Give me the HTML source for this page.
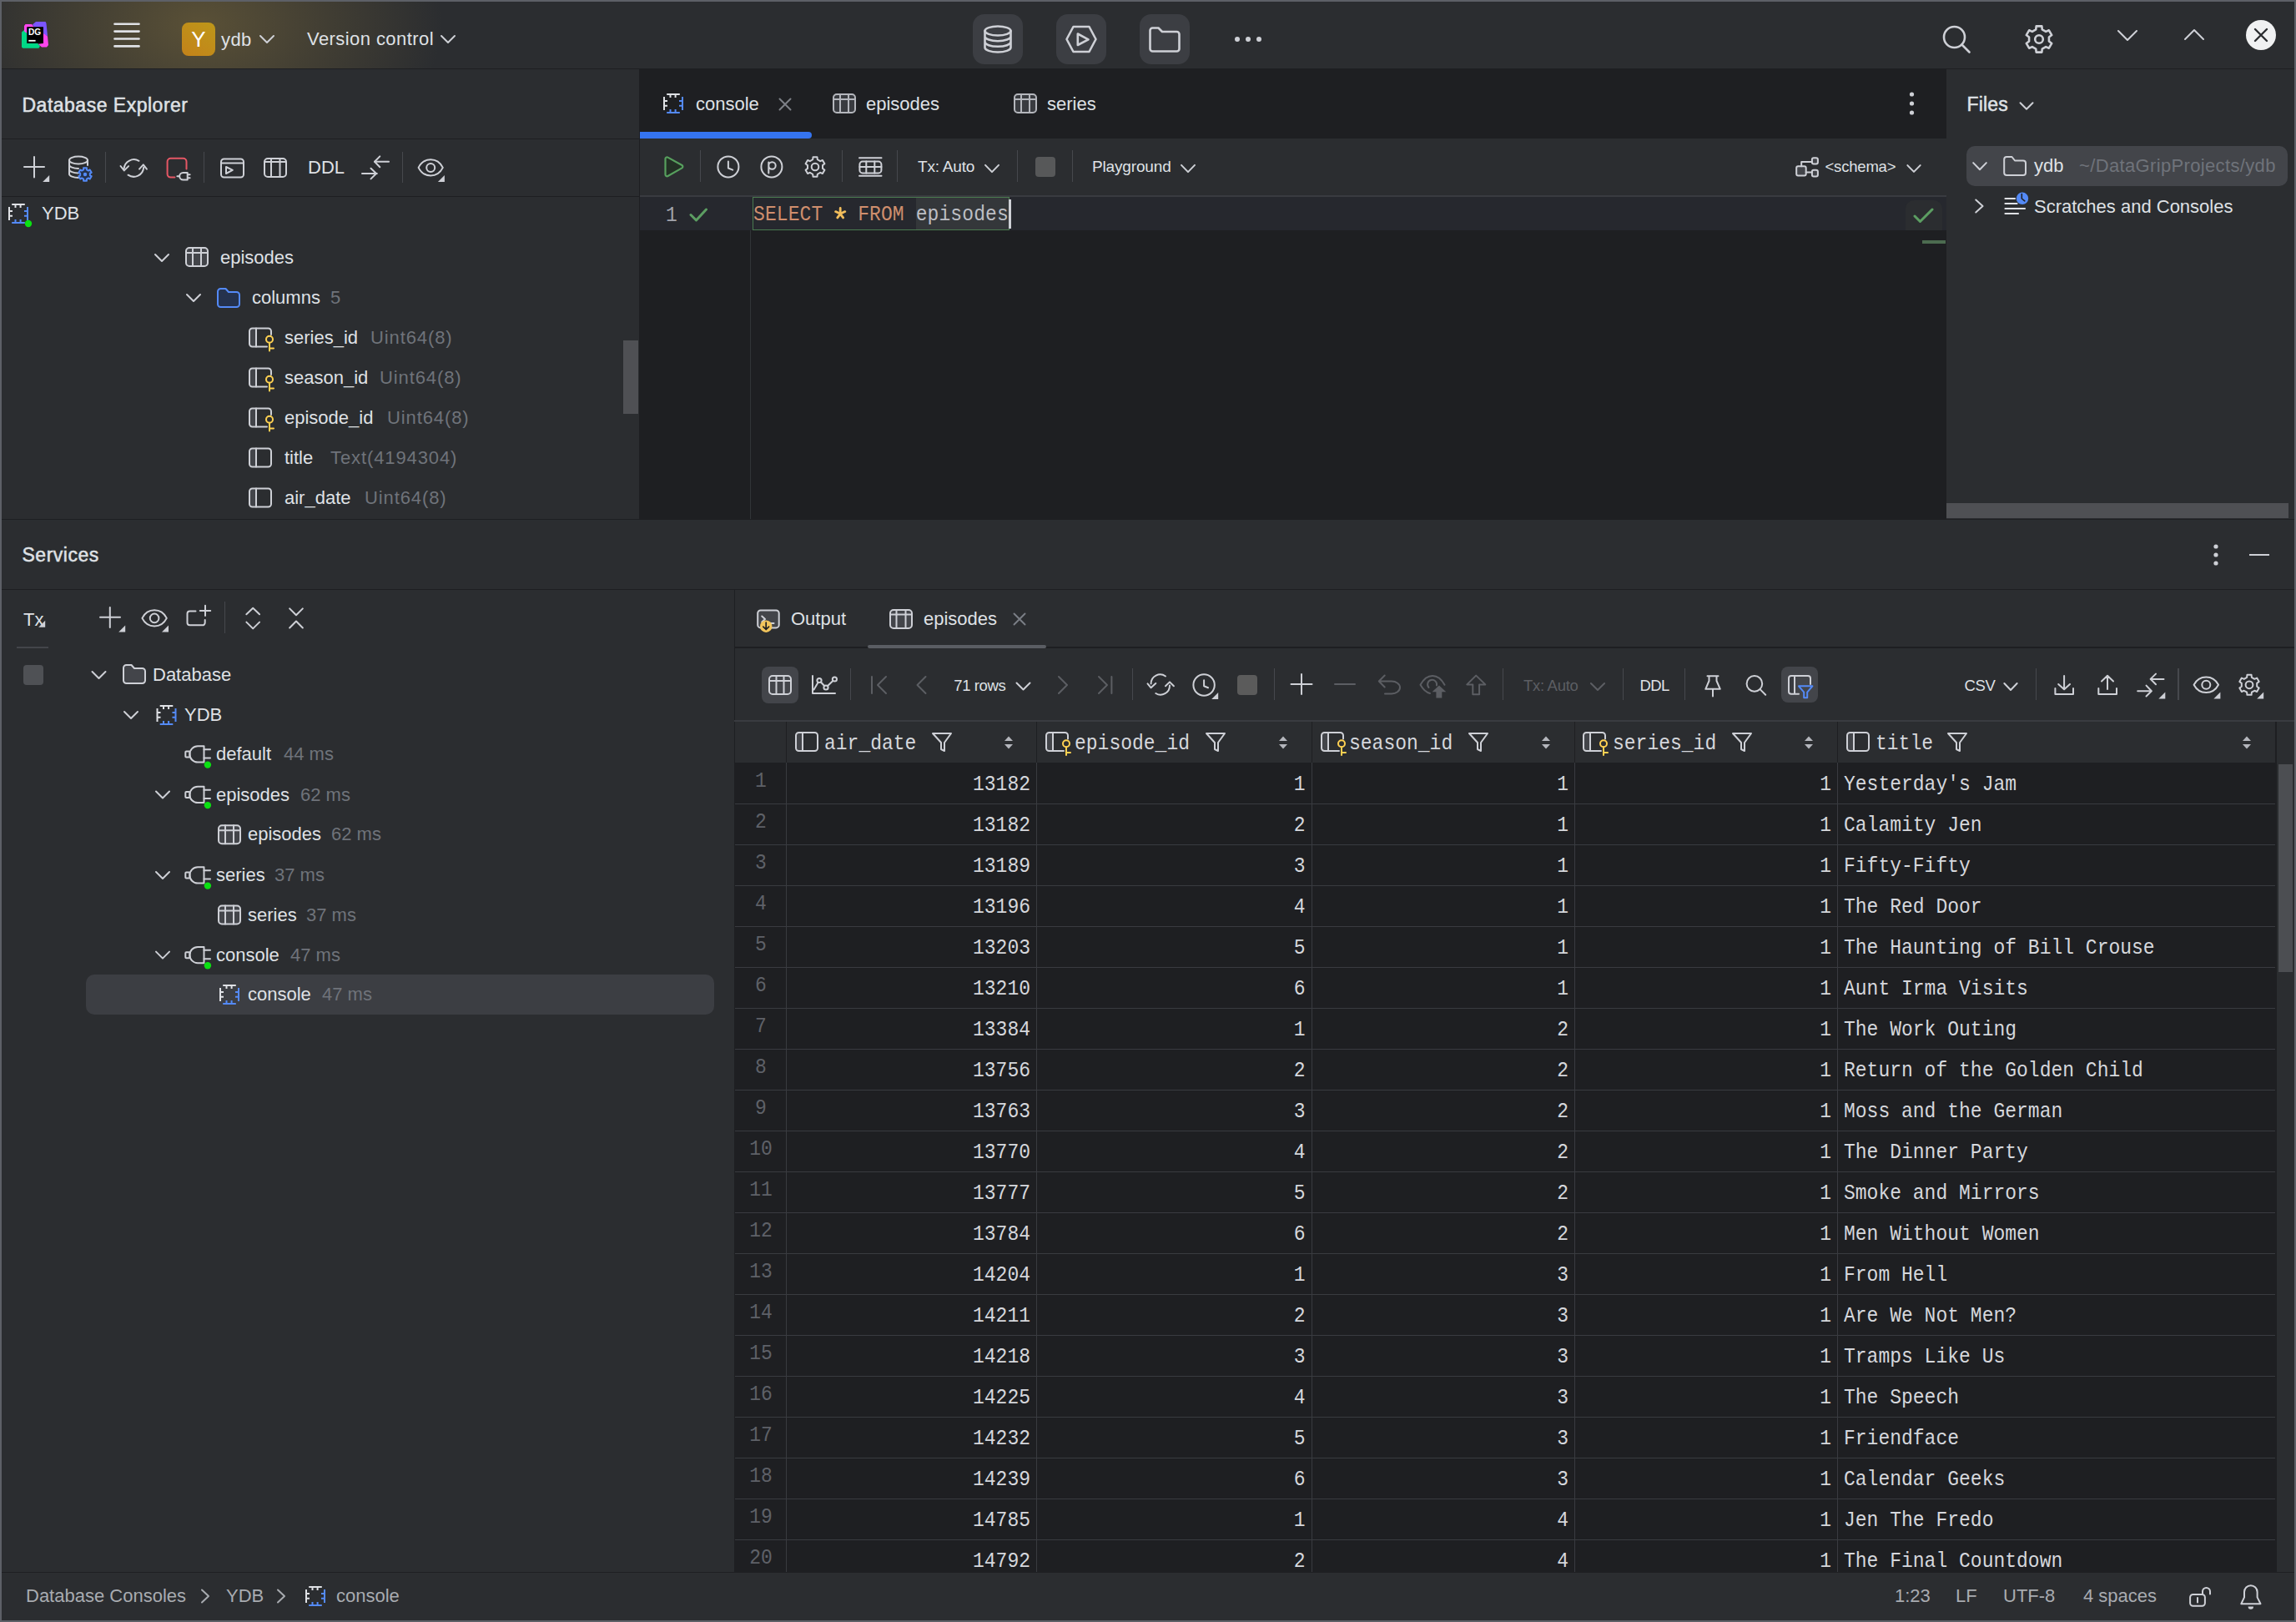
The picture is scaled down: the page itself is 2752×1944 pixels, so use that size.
<!DOCTYPE html><html><head><meta charset="utf-8"><style>
html,body{margin:0;padding:0;width:2752px;height:1944px;overflow:hidden;background:#2b2d30;}
body{position:relative;font-family:'Liberation Sans',sans-serif;}
div{box-sizing:border-box}
</style></head><body>
<div style="position:absolute;left:0px;top:0px;width:2752px;height:82px;background:#2b2d30;border-radius:0px;"></div>
<div style="position:absolute;left:0px;top:0px;width:900px;height:82px;background:radial-gradient(ellipse 290px 190px at 240px 30px, rgba(145,122,62,0.46), rgba(145,122,62,0) 100%);border-radius:0px;"></div>
<div style="position:absolute;left:0px;top:82px;width:2752px;height:1px;background:#1e1f22;border-radius:0px;"></div>
<div style="position:absolute;left:218px;top:27px;width:40px;height:40px;border-radius:8px;background:linear-gradient(35deg,#c4821a,#bd9719);color:#fff;font-family:'Liberation Sans';font-size:26px;line-height:40px;text-align:center">Y</div>
<div style="position:absolute;left:265px;top:27.6px;height:40px;line-height:40px;font-family:'Liberation Sans', sans-serif;font-size:22px;font-weight:400;color:#dfe1e5;white-space:pre;letter-spacing:0.4px">ydb</div>
<div style="position:absolute;left:368px;top:27.4px;height:40px;line-height:40px;font-family:'Liberation Sans', sans-serif;font-size:22px;font-weight:400;color:#dfe1e5;white-space:pre;letter-spacing:0.43px">Version control</div>
<div style="position:absolute;left:1166px;top:17px;width:60px;height:60px;background:#3c3e43;border-radius:14px;"></div>
<div style="position:absolute;left:1266px;top:17px;width:60px;height:60px;background:#3c3e43;border-radius:14px;"></div>
<div style="position:absolute;left:1366px;top:17px;width:60px;height:60px;background:#3c3e43;border-radius:14px;"></div>
<div style="position:absolute;left:26.5px;top:105.5px;height:40px;line-height:40px;font-family:'Liberation Sans', sans-serif;font-size:23px;font-weight:400;color:#dfe1e5;white-space:pre;letter-spacing:0.5px;-webkit-text-stroke:0.5px #dfe1e5">Database Explorer</div>
<div style="position:absolute;left:0px;top:166px;width:766px;height:1px;background:#1e1f22;border-radius:0px;"></div>
<div style="position:absolute;left:125.75px;top:181.5px;width:1.5px;height:37.0px;background:#46484d;border-radius:0px;"></div>
<div style="position:absolute;left:243.95px;top:181.5px;width:1.5px;height:37.0px;background:#46484d;border-radius:0px;"></div>
<div style="position:absolute;left:369px;top:181.0px;height:40px;line-height:40px;font-family:'Liberation Sans', sans-serif;font-size:22px;font-weight:400;color:#dfe1e5;white-space:pre;">DDL</div>
<div style="position:absolute;left:481.75px;top:181.5px;width:1.5px;height:37.0px;background:#46484d;border-radius:0px;"></div>
<div style="position:absolute;left:0px;top:235px;width:766px;height:1px;background:#1e1f22;border-radius:0px;"></div>
<div style="position:absolute;left:50px;top:236.0px;height:40px;line-height:40px;font-family:'Liberation Sans', sans-serif;font-size:22px;font-weight:400;color:#dfe1e5;white-space:pre;">YDB</div>
<div style="position:absolute;left:264px;top:289.0px;height:40px;line-height:40px;font-family:'Liberation Sans', sans-serif;font-size:22px;font-weight:400;color:#dfe1e5;white-space:pre;">episodes</div>
<div style="position:absolute;left:302px;top:337.0px;height:40px;line-height:40px;font-family:'Liberation Sans', sans-serif;font-size:22px;font-weight:400;color:#dfe1e5;white-space:pre;">columns</div>
<div style="position:absolute;left:396px;top:337.0px;height:40px;line-height:40px;font-family:'Liberation Sans', sans-serif;font-size:22px;font-weight:400;color:#6f737a;white-space:pre;">5</div>
<div style="position:absolute;left:341px;top:385.0px;height:40px;line-height:40px;font-family:'Liberation Sans', sans-serif;font-size:22px;font-weight:400;color:#dfe1e5;white-space:pre;">series_id</div>
<div style="position:absolute;left:444px;top:385.0px;height:40px;line-height:40px;font-family:'Liberation Sans', sans-serif;font-size:22px;font-weight:400;color:#6f737a;white-space:pre;letter-spacing:0.9px">Uint64(8)</div>
<div style="position:absolute;left:341px;top:433.0px;height:40px;line-height:40px;font-family:'Liberation Sans', sans-serif;font-size:22px;font-weight:400;color:#dfe1e5;white-space:pre;">season_id</div>
<div style="position:absolute;left:455px;top:433.0px;height:40px;line-height:40px;font-family:'Liberation Sans', sans-serif;font-size:22px;font-weight:400;color:#6f737a;white-space:pre;letter-spacing:0.9px">Uint64(8)</div>
<div style="position:absolute;left:341px;top:481.0px;height:40px;line-height:40px;font-family:'Liberation Sans', sans-serif;font-size:22px;font-weight:400;color:#dfe1e5;white-space:pre;">episode_id</div>
<div style="position:absolute;left:464px;top:481.0px;height:40px;line-height:40px;font-family:'Liberation Sans', sans-serif;font-size:22px;font-weight:400;color:#6f737a;white-space:pre;letter-spacing:0.9px">Uint64(8)</div>
<div style="position:absolute;left:341px;top:529.0px;height:40px;line-height:40px;font-family:'Liberation Sans', sans-serif;font-size:22px;font-weight:400;color:#dfe1e5;white-space:pre;">title</div>
<div style="position:absolute;left:396px;top:529.0px;height:40px;line-height:40px;font-family:'Liberation Sans', sans-serif;font-size:22px;font-weight:400;color:#6f737a;white-space:pre;letter-spacing:0.9px">Text(4194304)</div>
<div style="position:absolute;left:341px;top:577.0px;height:40px;line-height:40px;font-family:'Liberation Sans', sans-serif;font-size:22px;font-weight:400;color:#dfe1e5;white-space:pre;">air_date</div>
<div style="position:absolute;left:437px;top:577.0px;height:40px;line-height:40px;font-family:'Liberation Sans', sans-serif;font-size:22px;font-weight:400;color:#6f737a;white-space:pre;letter-spacing:0.9px">Uint64(8)</div>
<div style="position:absolute;left:747px;top:408px;width:18px;height:88px;background:#4f5054;border-radius:0px;"></div>
<div style="position:absolute;left:766px;top:83px;width:1px;height:540px;background:#1e1f22;border-radius:0px;"></div>
<div style="position:absolute;left:767px;top:83px;width:1566px;height:83px;background:#1e1f22;border-radius:0px;"></div>
<div style="position:absolute;left:834px;top:105.0px;height:40px;line-height:40px;font-family:'Liberation Sans', sans-serif;font-size:22px;font-weight:400;color:#dfe1e5;white-space:pre;">console</div>
<div style="position:absolute;left:767px;top:158px;width:206px;height:8px;background:#3574f0;border-radius:0px;border-radius:0 4px 4px 0"></div>
<div style="position:absolute;left:1038px;top:105.0px;height:40px;line-height:40px;font-family:'Liberation Sans', sans-serif;font-size:22px;font-weight:400;color:#dfe1e5;white-space:pre;">episodes</div>
<div style="position:absolute;left:1255px;top:105.0px;height:40px;line-height:40px;font-family:'Liberation Sans', sans-serif;font-size:22px;font-weight:400;color:#dfe1e5;white-space:pre;">series</div>
<div style="position:absolute;left:767px;top:166px;width:1566px;height:68px;background:#2b2d30;border-radius:0px;"></div>
<div style="position:absolute;left:767px;top:234px;width:1566px;height:2px;background:#393b40;border-radius:0px;"></div>
<div style="position:absolute;left:838.85px;top:180px;width:1.5px;height:38px;background:#46484d;border-radius:0px;"></div>
<div style="position:absolute;left:1008.75px;top:180px;width:1.5px;height:38px;background:#46484d;border-radius:0px;"></div>
<div style="position:absolute;left:1074.75px;top:180px;width:1.5px;height:38px;background:#46484d;border-radius:0px;"></div>
<div style="position:absolute;left:1100px;top:180.4px;height:40px;line-height:40px;font-family:'Liberation Sans', sans-serif;font-size:19px;font-weight:400;color:#dfe1e5;white-space:pre;letter-spacing:-0.2px">Tx: Auto</div>
<div style="position:absolute;left:1218.55px;top:180px;width:1.5px;height:38px;background:#46484d;border-radius:0px;"></div>
<div style="position:absolute;left:1241px;top:188px;width:24px;height:24px;background:#575859;border-radius:4px;"></div>
<div style="position:absolute;left:1284.75px;top:180px;width:1.5px;height:38px;background:#46484d;border-radius:0px;"></div>
<div style="position:absolute;left:1309px;top:180.4px;height:40px;line-height:40px;font-family:'Liberation Sans', sans-serif;font-size:19px;font-weight:400;color:#dfe1e5;white-space:pre;letter-spacing:-0.15px">Playground</div>
<div style="position:absolute;left:2187.5px;top:180.3px;height:40px;line-height:40px;font-family:'Liberation Sans', sans-serif;font-size:18.5px;font-weight:400;color:#dfe1e5;white-space:pre;letter-spacing:-0.2px">&lt;schema&gt;</div>
<div style="position:absolute;left:767px;top:236px;width:1566px;height:387px;background:#1e1f22;border-radius:0px;"></div>
<div style="position:absolute;left:767px;top:236px;width:1566px;height:40px;background:#26282e;border-radius:0px;"></div>
<div style="position:absolute;left:798px;top:238.0px;height:40px;line-height:40px;font-family:'Liberation Mono', monospace;font-size:23px;font-weight:400;color:#a1a3ab;white-space:pre;transform:scaleY(1.12);">1</div>
<div style="position:absolute;left:899px;top:276px;width:1px;height:347px;background:#313438;border-radius:0px;"></div>
<div style="position:absolute;left:902px;top:236px;width:308px;height:40px;background:transparent;border-radius:0px;border:1px solid #4a7a4f"></div>
<div style="position:absolute;left:1098px;top:237px;width:111px;height:38px;background:#34373a;border-radius:0px;"></div>
<div style="position:absolute;left:903px;top:237px;height:40px;line-height:40px;font-family:'Liberation Mono', monospace;font-size:23px;white-space:pre;color:#bcbec4;transform:scaleY(1.12);letter-spacing:0.1px"><span style="color:#cf8e6d">SELECT</span>   <span style="color:#cf8e6d">FROM</span> episodes</div>
<div style="position:absolute;left:1209px;top:239px;width:3px;height:35px;background:#ced0d6;border-radius:0px;"></div>
<div style="position:absolute;left:2284px;top:240px;width:44px;height:36px;background:#2b2d30;border-radius:0px;border-radius:10px 10px 0 0"></div>
<div style="position:absolute;left:2304px;top:288px;width:28px;height:4px;background:#4c6b50;border-radius:0px;"></div>
<div style="position:absolute;left:2333px;top:83px;width:417px;height:540px;background:#2b2d30;border-radius:0px;"></div>
<div style="position:absolute;left:2357.5px;top:105.0px;height:40px;line-height:40px;font-family:'Liberation Sans', sans-serif;font-size:23px;font-weight:400;color:#dfe1e5;white-space:pre;letter-spacing:0.2px;-webkit-text-stroke:0.5px #dfe1e5">Files</div>
<div style="position:absolute;left:2357px;top:175px;width:385px;height:48px;background:#43454a;border-radius:10px;"></div>
<div style="position:absolute;left:2438px;top:179.0px;height:40px;line-height:40px;font-family:'Liberation Sans', sans-serif;font-size:22px;font-weight:400;color:#dfe1e5;white-space:pre;">ydb</div>
<div style="position:absolute;left:2492px;top:179.0px;height:40px;line-height:40px;font-family:'Liberation Sans', sans-serif;font-size:22px;font-weight:400;color:#6f737a;white-space:pre;letter-spacing:0.35px">~/DataGripProjects/ydb</div>
<div style="position:absolute;left:2438px;top:228.0px;height:40px;line-height:40px;font-family:'Liberation Sans', sans-serif;font-size:22px;font-weight:400;color:#dfe1e5;white-space:pre;">Scratches and Consoles</div>
<div style="position:absolute;left:2333px;top:603px;width:410px;height:18px;background:#4f5054;border-radius:0px;"></div>
<div style="position:absolute;left:0px;top:622px;width:2752px;height:1px;background:#1e1f22;border-radius:0px;"></div>
<div style="position:absolute;left:26.5px;top:645.0px;height:40px;line-height:40px;font-family:'Liberation Sans', sans-serif;font-size:23px;font-weight:400;color:#dfe1e5;white-space:pre;letter-spacing:0.5px;-webkit-text-stroke:0.5px #dfe1e5">Services</div>
<div style="position:absolute;left:2696px;top:664px;width:24px;height:2px;background:#ced0d6;border-radius:0px;"></div>
<div style="position:absolute;left:0px;top:706px;width:2752px;height:1px;background:#1e1f22;border-radius:0px;"></div>
<div style="position:absolute;left:28px;top:723.0px;height:40px;line-height:40px;font-family:'Liberation Sans', sans-serif;font-size:22px;font-weight:400;color:#dfe1e5;white-space:pre;">Tx</div>
<div style="position:absolute;left:20px;top:775px;width:38px;height:1.5px;background:#43454a;border-radius:0px;"></div>
<div style="position:absolute;left:268.75px;top:721.3px;width:1.5px;height:37.30000000000007px;background:#46484d;border-radius:0px;"></div>
<div style="position:absolute;left:28px;top:797px;width:24px;height:24px;background:#4f5155;border-radius:4px;"></div>
<div style="position:absolute;left:183px;top:789.0px;height:40px;line-height:40px;font-family:'Liberation Sans', sans-serif;font-size:22px;font-weight:400;color:#dfe1e5;white-space:pre;">Database</div>
<div style="position:absolute;left:221px;top:837.0px;height:40px;line-height:40px;font-family:'Liberation Sans', sans-serif;font-size:22px;font-weight:400;color:#dfe1e5;white-space:pre;">YDB</div>
<div style="position:absolute;left:103px;top:1168px;width:753px;height:48px;background:#3c3e43;border-radius:10px;"></div>
<div style="position:absolute;left:259px;top:884.0px;height:40px;line-height:40px;font-family:'Liberation Sans', sans-serif;font-size:22px;font-weight:400;color:#dfe1e5;white-space:pre;">default</div>
<div style="position:absolute;left:340px;top:884.0px;height:40px;line-height:40px;font-family:'Liberation Sans', sans-serif;font-size:22px;font-weight:400;color:#6f737a;white-space:pre;">44 ms</div>
<div style="position:absolute;left:259px;top:932.5px;height:40px;line-height:40px;font-family:'Liberation Sans', sans-serif;font-size:22px;font-weight:400;color:#dfe1e5;white-space:pre;">episodes</div>
<div style="position:absolute;left:360px;top:932.5px;height:40px;line-height:40px;font-family:'Liberation Sans', sans-serif;font-size:22px;font-weight:400;color:#6f737a;white-space:pre;">62 ms</div>
<div style="position:absolute;left:297px;top:980.3px;height:40px;line-height:40px;font-family:'Liberation Sans', sans-serif;font-size:22px;font-weight:400;color:#dfe1e5;white-space:pre;">episodes</div>
<div style="position:absolute;left:397px;top:980.3px;height:40px;line-height:40px;font-family:'Liberation Sans', sans-serif;font-size:22px;font-weight:400;color:#6f737a;white-space:pre;">62 ms</div>
<div style="position:absolute;left:259px;top:1029.0px;height:40px;line-height:40px;font-family:'Liberation Sans', sans-serif;font-size:22px;font-weight:400;color:#dfe1e5;white-space:pre;">series</div>
<div style="position:absolute;left:329px;top:1029.0px;height:40px;line-height:40px;font-family:'Liberation Sans', sans-serif;font-size:22px;font-weight:400;color:#6f737a;white-space:pre;">37 ms</div>
<div style="position:absolute;left:297px;top:1076.5px;height:40px;line-height:40px;font-family:'Liberation Sans', sans-serif;font-size:22px;font-weight:400;color:#dfe1e5;white-space:pre;">series</div>
<div style="position:absolute;left:367px;top:1076.5px;height:40px;line-height:40px;font-family:'Liberation Sans', sans-serif;font-size:22px;font-weight:400;color:#6f737a;white-space:pre;">37 ms</div>
<div style="position:absolute;left:259px;top:1124.6px;height:40px;line-height:40px;font-family:'Liberation Sans', sans-serif;font-size:22px;font-weight:400;color:#dfe1e5;white-space:pre;">console</div>
<div style="position:absolute;left:348px;top:1124.6px;height:40px;line-height:40px;font-family:'Liberation Sans', sans-serif;font-size:22px;font-weight:400;color:#6f737a;white-space:pre;">47 ms</div>
<div style="position:absolute;left:297px;top:1172.4px;height:40px;line-height:40px;font-family:'Liberation Sans', sans-serif;font-size:22px;font-weight:400;color:#dfe1e5;white-space:pre;">console</div>
<div style="position:absolute;left:386px;top:1172.4px;height:40px;line-height:40px;font-family:'Liberation Sans', sans-serif;font-size:22px;font-weight:400;color:#6f737a;white-space:pre;">47 ms</div>
<div style="position:absolute;left:880px;top:707px;width:1px;height:1178px;background:#1e1f22;border-radius:0px;"></div>
<div style="position:absolute;left:948px;top:722.0px;height:40px;line-height:40px;font-family:'Liberation Sans', sans-serif;font-size:22px;font-weight:400;color:#dfe1e5;white-space:pre;">Output</div>
<div style="position:absolute;left:1107px;top:722.0px;height:40px;line-height:40px;font-family:'Liberation Sans', sans-serif;font-size:22px;font-weight:400;color:#dfe1e5;white-space:pre;">episodes</div>
<div style="position:absolute;left:880px;top:775px;width:1872px;height:2px;background:#1e1f22;border-radius:0px;"></div>
<div style="position:absolute;left:1040px;top:773px;width:214px;height:4px;background:#5a5d63;border-radius:2px;"></div>
<div style="position:absolute;left:913px;top:799px;width:44px;height:44px;background:#43454a;border-radius:8px;"></div>
<div style="position:absolute;left:1018.65px;top:801.4px;width:1.5px;height:37.200000000000045px;background:#46484d;border-radius:0px;"></div>
<div style="position:absolute;left:1143.3px;top:801.5px;height:40px;line-height:40px;font-family:'Liberation Sans', sans-serif;font-size:18.5px;font-weight:400;color:#dfe1e5;white-space:pre;letter-spacing:-0.4px">71 rows</div>
<div style="position:absolute;left:1356.65px;top:801.4px;width:1.5px;height:37.200000000000045px;background:#46484d;border-radius:0px;"></div>
<div style="position:absolute;left:1483.3px;top:809px;width:23.6px;height:23.7px;background:#5b5b5b;border-radius:4px;"></div>
<div style="position:absolute;left:1526.65px;top:801.4px;width:1.5px;height:37.200000000000045px;background:#46484d;border-radius:0px;"></div>
<div style="position:absolute;left:1800.85px;top:801.4px;width:1.5px;height:37.200000000000045px;background:#46484d;border-radius:0px;"></div>
<div style="position:absolute;left:1826px;top:801.5px;height:40px;line-height:40px;font-family:'Liberation Sans', sans-serif;font-size:18.5px;font-weight:400;color:#5c5e63;white-space:pre;letter-spacing:-0.3px">Tx: Auto</div>
<div style="position:absolute;left:1944.65px;top:801.4px;width:1.5px;height:37.200000000000045px;background:#46484d;border-radius:0px;"></div>
<div style="position:absolute;left:1965.6px;top:801.5px;height:40px;line-height:40px;font-family:'Liberation Sans', sans-serif;font-size:18.5px;font-weight:400;color:#dfe1e5;white-space:pre;letter-spacing:-0.6px">DDL</div>
<div style="position:absolute;left:2018.75px;top:801.4px;width:1.5px;height:37.200000000000045px;background:#46484d;border-radius:0px;"></div>
<div style="position:absolute;left:2135.2px;top:798.8px;width:43.5px;height:43.7px;background:#43454a;border-radius:8px;"></div>
<div style="position:absolute;left:2354.5px;top:801.5px;height:40px;line-height:40px;font-family:'Liberation Sans', sans-serif;font-size:18.5px;font-weight:400;color:#dfe1e5;white-space:pre;letter-spacing:-0.4px">CSV</div>
<div style="position:absolute;left:2439.95px;top:801.4px;width:1.5px;height:37.200000000000045px;background:#46484d;border-radius:0px;"></div>
<div style="position:absolute;left:2610.05px;top:801.4px;width:1.5px;height:37.200000000000045px;background:#46484d;border-radius:0px;"></div>
<div style="position:absolute;left:880px;top:863px;width:1872px;height:2px;background:#393b40;border-radius:0px;"></div>
<div style="position:absolute;left:881px;top:865px;width:1846px;height:49px;background:#2b2d30;border-radius:0px;"></div>
<div style="position:absolute;left:881px;top:914px;width:1846px;height:971px;background:#1e1f22;border-radius:0px;"></div>
<div style="position:absolute;left:942px;top:865px;width:1px;height:49px;background:#1e1f22;border-radius:0px;"></div>
<div style="position:absolute;left:1242px;top:865px;width:1px;height:49px;background:#1e1f22;border-radius:0px;"></div>
<div style="position:absolute;left:1572px;top:865px;width:1px;height:49px;background:#1e1f22;border-radius:0px;"></div>
<div style="position:absolute;left:1887px;top:865px;width:1px;height:49px;background:#1e1f22;border-radius:0px;"></div>
<div style="position:absolute;left:2202px;top:865px;width:1px;height:49px;background:#1e1f22;border-radius:0px;"></div>
<div style="position:absolute;left:988px;top:871.0px;height:40px;line-height:40px;font-family:'Liberation Mono', monospace;font-size:23px;font-weight:400;color:#d5d7dc;white-space:pre;transform:scaleY(1.12);">air_date</div>
<div style="position:absolute;left:1288px;top:871.0px;height:40px;line-height:40px;font-family:'Liberation Mono', monospace;font-size:23px;font-weight:400;color:#d5d7dc;white-space:pre;transform:scaleY(1.12);">episode_id</div>
<div style="position:absolute;left:1617px;top:871.0px;height:40px;line-height:40px;font-family:'Liberation Mono', monospace;font-size:23px;font-weight:400;color:#d5d7dc;white-space:pre;transform:scaleY(1.12);">season_id</div>
<div style="position:absolute;left:1933px;top:871.0px;height:40px;line-height:40px;font-family:'Liberation Mono', monospace;font-size:23px;font-weight:400;color:#d5d7dc;white-space:pre;transform:scaleY(1.12);">series_id</div>
<div style="position:absolute;left:2248px;top:871.0px;height:40px;line-height:40px;font-family:'Liberation Mono', monospace;font-size:23px;font-weight:400;color:#d5d7dc;white-space:pre;transform:scaleY(1.12);">title</div>
<div style="position:absolute;left:862.0px;width:100px;top:915.5px;height:40px;line-height:40px;font-family:'Liberation Mono', monospace;font-size:23px;color:#5e6168;white-space:pre;text-align:center;transform:scaleY(1.12)">1</div>
<div style="position:absolute;right:1517px;top:920.0px;height:40px;line-height:40px;font-family:'Liberation Mono', monospace;font-size:23px;color:#d5d7dc;white-space:pre;text-align:right;transform:scaleY(1.12)">13182</div>
<div style="position:absolute;right:1187.5px;top:920.0px;height:40px;line-height:40px;font-family:'Liberation Mono', monospace;font-size:23px;color:#d5d7dc;white-space:pre;text-align:right;transform:scaleY(1.12)">1</div>
<div style="position:absolute;right:872px;top:920.0px;height:40px;line-height:40px;font-family:'Liberation Mono', monospace;font-size:23px;color:#d5d7dc;white-space:pre;text-align:right;transform:scaleY(1.12)">1</div>
<div style="position:absolute;right:557px;top:920.0px;height:40px;line-height:40px;font-family:'Liberation Mono', monospace;font-size:23px;color:#d5d7dc;white-space:pre;text-align:right;transform:scaleY(1.12)">1</div>
<div style="position:absolute;left:2210px;top:920.0px;height:40px;line-height:40px;font-family:'Liberation Mono', monospace;font-size:23px;font-weight:400;color:#d5d7dc;white-space:pre;transform:scaleY(1.12);">Yesterday&#39;s Jam</div>
<div style="position:absolute;left:881px;top:963px;width:1846px;height:1px;background:#393b40;border-radius:0px;"></div>
<div style="position:absolute;left:862.0px;width:100px;top:964.5px;height:40px;line-height:40px;font-family:'Liberation Mono', monospace;font-size:23px;color:#5e6168;white-space:pre;text-align:center;transform:scaleY(1.12)">2</div>
<div style="position:absolute;right:1517px;top:969.0px;height:40px;line-height:40px;font-family:'Liberation Mono', monospace;font-size:23px;color:#d5d7dc;white-space:pre;text-align:right;transform:scaleY(1.12)">13182</div>
<div style="position:absolute;right:1187.5px;top:969.0px;height:40px;line-height:40px;font-family:'Liberation Mono', monospace;font-size:23px;color:#d5d7dc;white-space:pre;text-align:right;transform:scaleY(1.12)">2</div>
<div style="position:absolute;right:872px;top:969.0px;height:40px;line-height:40px;font-family:'Liberation Mono', monospace;font-size:23px;color:#d5d7dc;white-space:pre;text-align:right;transform:scaleY(1.12)">1</div>
<div style="position:absolute;right:557px;top:969.0px;height:40px;line-height:40px;font-family:'Liberation Mono', monospace;font-size:23px;color:#d5d7dc;white-space:pre;text-align:right;transform:scaleY(1.12)">1</div>
<div style="position:absolute;left:2210px;top:969.0px;height:40px;line-height:40px;font-family:'Liberation Mono', monospace;font-size:23px;font-weight:400;color:#d5d7dc;white-space:pre;transform:scaleY(1.12);">Calamity Jen</div>
<div style="position:absolute;left:881px;top:1012px;width:1846px;height:1px;background:#393b40;border-radius:0px;"></div>
<div style="position:absolute;left:862.0px;width:100px;top:1013.5px;height:40px;line-height:40px;font-family:'Liberation Mono', monospace;font-size:23px;color:#5e6168;white-space:pre;text-align:center;transform:scaleY(1.12)">3</div>
<div style="position:absolute;right:1517px;top:1018.0px;height:40px;line-height:40px;font-family:'Liberation Mono', monospace;font-size:23px;color:#d5d7dc;white-space:pre;text-align:right;transform:scaleY(1.12)">13189</div>
<div style="position:absolute;right:1187.5px;top:1018.0px;height:40px;line-height:40px;font-family:'Liberation Mono', monospace;font-size:23px;color:#d5d7dc;white-space:pre;text-align:right;transform:scaleY(1.12)">3</div>
<div style="position:absolute;right:872px;top:1018.0px;height:40px;line-height:40px;font-family:'Liberation Mono', monospace;font-size:23px;color:#d5d7dc;white-space:pre;text-align:right;transform:scaleY(1.12)">1</div>
<div style="position:absolute;right:557px;top:1018.0px;height:40px;line-height:40px;font-family:'Liberation Mono', monospace;font-size:23px;color:#d5d7dc;white-space:pre;text-align:right;transform:scaleY(1.12)">1</div>
<div style="position:absolute;left:2210px;top:1018.0px;height:40px;line-height:40px;font-family:'Liberation Mono', monospace;font-size:23px;font-weight:400;color:#d5d7dc;white-space:pre;transform:scaleY(1.12);">Fifty-Fifty</div>
<div style="position:absolute;left:881px;top:1061px;width:1846px;height:1px;background:#393b40;border-radius:0px;"></div>
<div style="position:absolute;left:862.0px;width:100px;top:1062.5px;height:40px;line-height:40px;font-family:'Liberation Mono', monospace;font-size:23px;color:#5e6168;white-space:pre;text-align:center;transform:scaleY(1.12)">4</div>
<div style="position:absolute;right:1517px;top:1067.0px;height:40px;line-height:40px;font-family:'Liberation Mono', monospace;font-size:23px;color:#d5d7dc;white-space:pre;text-align:right;transform:scaleY(1.12)">13196</div>
<div style="position:absolute;right:1187.5px;top:1067.0px;height:40px;line-height:40px;font-family:'Liberation Mono', monospace;font-size:23px;color:#d5d7dc;white-space:pre;text-align:right;transform:scaleY(1.12)">4</div>
<div style="position:absolute;right:872px;top:1067.0px;height:40px;line-height:40px;font-family:'Liberation Mono', monospace;font-size:23px;color:#d5d7dc;white-space:pre;text-align:right;transform:scaleY(1.12)">1</div>
<div style="position:absolute;right:557px;top:1067.0px;height:40px;line-height:40px;font-family:'Liberation Mono', monospace;font-size:23px;color:#d5d7dc;white-space:pre;text-align:right;transform:scaleY(1.12)">1</div>
<div style="position:absolute;left:2210px;top:1067.0px;height:40px;line-height:40px;font-family:'Liberation Mono', monospace;font-size:23px;font-weight:400;color:#d5d7dc;white-space:pre;transform:scaleY(1.12);">The Red Door</div>
<div style="position:absolute;left:881px;top:1110px;width:1846px;height:1px;background:#393b40;border-radius:0px;"></div>
<div style="position:absolute;left:862.0px;width:100px;top:1111.5px;height:40px;line-height:40px;font-family:'Liberation Mono', monospace;font-size:23px;color:#5e6168;white-space:pre;text-align:center;transform:scaleY(1.12)">5</div>
<div style="position:absolute;right:1517px;top:1116.0px;height:40px;line-height:40px;font-family:'Liberation Mono', monospace;font-size:23px;color:#d5d7dc;white-space:pre;text-align:right;transform:scaleY(1.12)">13203</div>
<div style="position:absolute;right:1187.5px;top:1116.0px;height:40px;line-height:40px;font-family:'Liberation Mono', monospace;font-size:23px;color:#d5d7dc;white-space:pre;text-align:right;transform:scaleY(1.12)">5</div>
<div style="position:absolute;right:872px;top:1116.0px;height:40px;line-height:40px;font-family:'Liberation Mono', monospace;font-size:23px;color:#d5d7dc;white-space:pre;text-align:right;transform:scaleY(1.12)">1</div>
<div style="position:absolute;right:557px;top:1116.0px;height:40px;line-height:40px;font-family:'Liberation Mono', monospace;font-size:23px;color:#d5d7dc;white-space:pre;text-align:right;transform:scaleY(1.12)">1</div>
<div style="position:absolute;left:2210px;top:1116.0px;height:40px;line-height:40px;font-family:'Liberation Mono', monospace;font-size:23px;font-weight:400;color:#d5d7dc;white-space:pre;transform:scaleY(1.12);">The Haunting of Bill Crouse</div>
<div style="position:absolute;left:881px;top:1159px;width:1846px;height:1px;background:#393b40;border-radius:0px;"></div>
<div style="position:absolute;left:862.0px;width:100px;top:1160.5px;height:40px;line-height:40px;font-family:'Liberation Mono', monospace;font-size:23px;color:#5e6168;white-space:pre;text-align:center;transform:scaleY(1.12)">6</div>
<div style="position:absolute;right:1517px;top:1165.0px;height:40px;line-height:40px;font-family:'Liberation Mono', monospace;font-size:23px;color:#d5d7dc;white-space:pre;text-align:right;transform:scaleY(1.12)">13210</div>
<div style="position:absolute;right:1187.5px;top:1165.0px;height:40px;line-height:40px;font-family:'Liberation Mono', monospace;font-size:23px;color:#d5d7dc;white-space:pre;text-align:right;transform:scaleY(1.12)">6</div>
<div style="position:absolute;right:872px;top:1165.0px;height:40px;line-height:40px;font-family:'Liberation Mono', monospace;font-size:23px;color:#d5d7dc;white-space:pre;text-align:right;transform:scaleY(1.12)">1</div>
<div style="position:absolute;right:557px;top:1165.0px;height:40px;line-height:40px;font-family:'Liberation Mono', monospace;font-size:23px;color:#d5d7dc;white-space:pre;text-align:right;transform:scaleY(1.12)">1</div>
<div style="position:absolute;left:2210px;top:1165.0px;height:40px;line-height:40px;font-family:'Liberation Mono', monospace;font-size:23px;font-weight:400;color:#d5d7dc;white-space:pre;transform:scaleY(1.12);">Aunt Irma Visits</div>
<div style="position:absolute;left:881px;top:1208px;width:1846px;height:1px;background:#393b40;border-radius:0px;"></div>
<div style="position:absolute;left:862.0px;width:100px;top:1209.5px;height:40px;line-height:40px;font-family:'Liberation Mono', monospace;font-size:23px;color:#5e6168;white-space:pre;text-align:center;transform:scaleY(1.12)">7</div>
<div style="position:absolute;right:1517px;top:1214.0px;height:40px;line-height:40px;font-family:'Liberation Mono', monospace;font-size:23px;color:#d5d7dc;white-space:pre;text-align:right;transform:scaleY(1.12)">13384</div>
<div style="position:absolute;right:1187.5px;top:1214.0px;height:40px;line-height:40px;font-family:'Liberation Mono', monospace;font-size:23px;color:#d5d7dc;white-space:pre;text-align:right;transform:scaleY(1.12)">1</div>
<div style="position:absolute;right:872px;top:1214.0px;height:40px;line-height:40px;font-family:'Liberation Mono', monospace;font-size:23px;color:#d5d7dc;white-space:pre;text-align:right;transform:scaleY(1.12)">2</div>
<div style="position:absolute;right:557px;top:1214.0px;height:40px;line-height:40px;font-family:'Liberation Mono', monospace;font-size:23px;color:#d5d7dc;white-space:pre;text-align:right;transform:scaleY(1.12)">1</div>
<div style="position:absolute;left:2210px;top:1214.0px;height:40px;line-height:40px;font-family:'Liberation Mono', monospace;font-size:23px;font-weight:400;color:#d5d7dc;white-space:pre;transform:scaleY(1.12);">The Work Outing</div>
<div style="position:absolute;left:881px;top:1257px;width:1846px;height:1px;background:#393b40;border-radius:0px;"></div>
<div style="position:absolute;left:862.0px;width:100px;top:1258.5px;height:40px;line-height:40px;font-family:'Liberation Mono', monospace;font-size:23px;color:#5e6168;white-space:pre;text-align:center;transform:scaleY(1.12)">8</div>
<div style="position:absolute;right:1517px;top:1263.0px;height:40px;line-height:40px;font-family:'Liberation Mono', monospace;font-size:23px;color:#d5d7dc;white-space:pre;text-align:right;transform:scaleY(1.12)">13756</div>
<div style="position:absolute;right:1187.5px;top:1263.0px;height:40px;line-height:40px;font-family:'Liberation Mono', monospace;font-size:23px;color:#d5d7dc;white-space:pre;text-align:right;transform:scaleY(1.12)">2</div>
<div style="position:absolute;right:872px;top:1263.0px;height:40px;line-height:40px;font-family:'Liberation Mono', monospace;font-size:23px;color:#d5d7dc;white-space:pre;text-align:right;transform:scaleY(1.12)">2</div>
<div style="position:absolute;right:557px;top:1263.0px;height:40px;line-height:40px;font-family:'Liberation Mono', monospace;font-size:23px;color:#d5d7dc;white-space:pre;text-align:right;transform:scaleY(1.12)">1</div>
<div style="position:absolute;left:2210px;top:1263.0px;height:40px;line-height:40px;font-family:'Liberation Mono', monospace;font-size:23px;font-weight:400;color:#d5d7dc;white-space:pre;transform:scaleY(1.12);">Return of the Golden Child</div>
<div style="position:absolute;left:881px;top:1306px;width:1846px;height:1px;background:#393b40;border-radius:0px;"></div>
<div style="position:absolute;left:862.0px;width:100px;top:1307.5px;height:40px;line-height:40px;font-family:'Liberation Mono', monospace;font-size:23px;color:#5e6168;white-space:pre;text-align:center;transform:scaleY(1.12)">9</div>
<div style="position:absolute;right:1517px;top:1312.0px;height:40px;line-height:40px;font-family:'Liberation Mono', monospace;font-size:23px;color:#d5d7dc;white-space:pre;text-align:right;transform:scaleY(1.12)">13763</div>
<div style="position:absolute;right:1187.5px;top:1312.0px;height:40px;line-height:40px;font-family:'Liberation Mono', monospace;font-size:23px;color:#d5d7dc;white-space:pre;text-align:right;transform:scaleY(1.12)">3</div>
<div style="position:absolute;right:872px;top:1312.0px;height:40px;line-height:40px;font-family:'Liberation Mono', monospace;font-size:23px;color:#d5d7dc;white-space:pre;text-align:right;transform:scaleY(1.12)">2</div>
<div style="position:absolute;right:557px;top:1312.0px;height:40px;line-height:40px;font-family:'Liberation Mono', monospace;font-size:23px;color:#d5d7dc;white-space:pre;text-align:right;transform:scaleY(1.12)">1</div>
<div style="position:absolute;left:2210px;top:1312.0px;height:40px;line-height:40px;font-family:'Liberation Mono', monospace;font-size:23px;font-weight:400;color:#d5d7dc;white-space:pre;transform:scaleY(1.12);">Moss and the German</div>
<div style="position:absolute;left:881px;top:1355px;width:1846px;height:1px;background:#393b40;border-radius:0px;"></div>
<div style="position:absolute;left:862.0px;width:100px;top:1356.5px;height:40px;line-height:40px;font-family:'Liberation Mono', monospace;font-size:23px;color:#5e6168;white-space:pre;text-align:center;transform:scaleY(1.12)">10</div>
<div style="position:absolute;right:1517px;top:1361.0px;height:40px;line-height:40px;font-family:'Liberation Mono', monospace;font-size:23px;color:#d5d7dc;white-space:pre;text-align:right;transform:scaleY(1.12)">13770</div>
<div style="position:absolute;right:1187.5px;top:1361.0px;height:40px;line-height:40px;font-family:'Liberation Mono', monospace;font-size:23px;color:#d5d7dc;white-space:pre;text-align:right;transform:scaleY(1.12)">4</div>
<div style="position:absolute;right:872px;top:1361.0px;height:40px;line-height:40px;font-family:'Liberation Mono', monospace;font-size:23px;color:#d5d7dc;white-space:pre;text-align:right;transform:scaleY(1.12)">2</div>
<div style="position:absolute;right:557px;top:1361.0px;height:40px;line-height:40px;font-family:'Liberation Mono', monospace;font-size:23px;color:#d5d7dc;white-space:pre;text-align:right;transform:scaleY(1.12)">1</div>
<div style="position:absolute;left:2210px;top:1361.0px;height:40px;line-height:40px;font-family:'Liberation Mono', monospace;font-size:23px;font-weight:400;color:#d5d7dc;white-space:pre;transform:scaleY(1.12);">The Dinner Party</div>
<div style="position:absolute;left:881px;top:1404px;width:1846px;height:1px;background:#393b40;border-radius:0px;"></div>
<div style="position:absolute;left:862.0px;width:100px;top:1405.5px;height:40px;line-height:40px;font-family:'Liberation Mono', monospace;font-size:23px;color:#5e6168;white-space:pre;text-align:center;transform:scaleY(1.12)">11</div>
<div style="position:absolute;right:1517px;top:1410.0px;height:40px;line-height:40px;font-family:'Liberation Mono', monospace;font-size:23px;color:#d5d7dc;white-space:pre;text-align:right;transform:scaleY(1.12)">13777</div>
<div style="position:absolute;right:1187.5px;top:1410.0px;height:40px;line-height:40px;font-family:'Liberation Mono', monospace;font-size:23px;color:#d5d7dc;white-space:pre;text-align:right;transform:scaleY(1.12)">5</div>
<div style="position:absolute;right:872px;top:1410.0px;height:40px;line-height:40px;font-family:'Liberation Mono', monospace;font-size:23px;color:#d5d7dc;white-space:pre;text-align:right;transform:scaleY(1.12)">2</div>
<div style="position:absolute;right:557px;top:1410.0px;height:40px;line-height:40px;font-family:'Liberation Mono', monospace;font-size:23px;color:#d5d7dc;white-space:pre;text-align:right;transform:scaleY(1.12)">1</div>
<div style="position:absolute;left:2210px;top:1410.0px;height:40px;line-height:40px;font-family:'Liberation Mono', monospace;font-size:23px;font-weight:400;color:#d5d7dc;white-space:pre;transform:scaleY(1.12);">Smoke and Mirrors</div>
<div style="position:absolute;left:881px;top:1453px;width:1846px;height:1px;background:#393b40;border-radius:0px;"></div>
<div style="position:absolute;left:862.0px;width:100px;top:1454.5px;height:40px;line-height:40px;font-family:'Liberation Mono', monospace;font-size:23px;color:#5e6168;white-space:pre;text-align:center;transform:scaleY(1.12)">12</div>
<div style="position:absolute;right:1517px;top:1459.0px;height:40px;line-height:40px;font-family:'Liberation Mono', monospace;font-size:23px;color:#d5d7dc;white-space:pre;text-align:right;transform:scaleY(1.12)">13784</div>
<div style="position:absolute;right:1187.5px;top:1459.0px;height:40px;line-height:40px;font-family:'Liberation Mono', monospace;font-size:23px;color:#d5d7dc;white-space:pre;text-align:right;transform:scaleY(1.12)">6</div>
<div style="position:absolute;right:872px;top:1459.0px;height:40px;line-height:40px;font-family:'Liberation Mono', monospace;font-size:23px;color:#d5d7dc;white-space:pre;text-align:right;transform:scaleY(1.12)">2</div>
<div style="position:absolute;right:557px;top:1459.0px;height:40px;line-height:40px;font-family:'Liberation Mono', monospace;font-size:23px;color:#d5d7dc;white-space:pre;text-align:right;transform:scaleY(1.12)">1</div>
<div style="position:absolute;left:2210px;top:1459.0px;height:40px;line-height:40px;font-family:'Liberation Mono', monospace;font-size:23px;font-weight:400;color:#d5d7dc;white-space:pre;transform:scaleY(1.12);">Men Without Women</div>
<div style="position:absolute;left:881px;top:1502px;width:1846px;height:1px;background:#393b40;border-radius:0px;"></div>
<div style="position:absolute;left:862.0px;width:100px;top:1503.5px;height:40px;line-height:40px;font-family:'Liberation Mono', monospace;font-size:23px;color:#5e6168;white-space:pre;text-align:center;transform:scaleY(1.12)">13</div>
<div style="position:absolute;right:1517px;top:1508.0px;height:40px;line-height:40px;font-family:'Liberation Mono', monospace;font-size:23px;color:#d5d7dc;white-space:pre;text-align:right;transform:scaleY(1.12)">14204</div>
<div style="position:absolute;right:1187.5px;top:1508.0px;height:40px;line-height:40px;font-family:'Liberation Mono', monospace;font-size:23px;color:#d5d7dc;white-space:pre;text-align:right;transform:scaleY(1.12)">1</div>
<div style="position:absolute;right:872px;top:1508.0px;height:40px;line-height:40px;font-family:'Liberation Mono', monospace;font-size:23px;color:#d5d7dc;white-space:pre;text-align:right;transform:scaleY(1.12)">3</div>
<div style="position:absolute;right:557px;top:1508.0px;height:40px;line-height:40px;font-family:'Liberation Mono', monospace;font-size:23px;color:#d5d7dc;white-space:pre;text-align:right;transform:scaleY(1.12)">1</div>
<div style="position:absolute;left:2210px;top:1508.0px;height:40px;line-height:40px;font-family:'Liberation Mono', monospace;font-size:23px;font-weight:400;color:#d5d7dc;white-space:pre;transform:scaleY(1.12);">From Hell</div>
<div style="position:absolute;left:881px;top:1551px;width:1846px;height:1px;background:#393b40;border-radius:0px;"></div>
<div style="position:absolute;left:862.0px;width:100px;top:1552.5px;height:40px;line-height:40px;font-family:'Liberation Mono', monospace;font-size:23px;color:#5e6168;white-space:pre;text-align:center;transform:scaleY(1.12)">14</div>
<div style="position:absolute;right:1517px;top:1557.0px;height:40px;line-height:40px;font-family:'Liberation Mono', monospace;font-size:23px;color:#d5d7dc;white-space:pre;text-align:right;transform:scaleY(1.12)">14211</div>
<div style="position:absolute;right:1187.5px;top:1557.0px;height:40px;line-height:40px;font-family:'Liberation Mono', monospace;font-size:23px;color:#d5d7dc;white-space:pre;text-align:right;transform:scaleY(1.12)">2</div>
<div style="position:absolute;right:872px;top:1557.0px;height:40px;line-height:40px;font-family:'Liberation Mono', monospace;font-size:23px;color:#d5d7dc;white-space:pre;text-align:right;transform:scaleY(1.12)">3</div>
<div style="position:absolute;right:557px;top:1557.0px;height:40px;line-height:40px;font-family:'Liberation Mono', monospace;font-size:23px;color:#d5d7dc;white-space:pre;text-align:right;transform:scaleY(1.12)">1</div>
<div style="position:absolute;left:2210px;top:1557.0px;height:40px;line-height:40px;font-family:'Liberation Mono', monospace;font-size:23px;font-weight:400;color:#d5d7dc;white-space:pre;transform:scaleY(1.12);">Are We Not Men?</div>
<div style="position:absolute;left:881px;top:1600px;width:1846px;height:1px;background:#393b40;border-radius:0px;"></div>
<div style="position:absolute;left:862.0px;width:100px;top:1601.5px;height:40px;line-height:40px;font-family:'Liberation Mono', monospace;font-size:23px;color:#5e6168;white-space:pre;text-align:center;transform:scaleY(1.12)">15</div>
<div style="position:absolute;right:1517px;top:1606.0px;height:40px;line-height:40px;font-family:'Liberation Mono', monospace;font-size:23px;color:#d5d7dc;white-space:pre;text-align:right;transform:scaleY(1.12)">14218</div>
<div style="position:absolute;right:1187.5px;top:1606.0px;height:40px;line-height:40px;font-family:'Liberation Mono', monospace;font-size:23px;color:#d5d7dc;white-space:pre;text-align:right;transform:scaleY(1.12)">3</div>
<div style="position:absolute;right:872px;top:1606.0px;height:40px;line-height:40px;font-family:'Liberation Mono', monospace;font-size:23px;color:#d5d7dc;white-space:pre;text-align:right;transform:scaleY(1.12)">3</div>
<div style="position:absolute;right:557px;top:1606.0px;height:40px;line-height:40px;font-family:'Liberation Mono', monospace;font-size:23px;color:#d5d7dc;white-space:pre;text-align:right;transform:scaleY(1.12)">1</div>
<div style="position:absolute;left:2210px;top:1606.0px;height:40px;line-height:40px;font-family:'Liberation Mono', monospace;font-size:23px;font-weight:400;color:#d5d7dc;white-space:pre;transform:scaleY(1.12);">Tramps Like Us</div>
<div style="position:absolute;left:881px;top:1649px;width:1846px;height:1px;background:#393b40;border-radius:0px;"></div>
<div style="position:absolute;left:862.0px;width:100px;top:1650.5px;height:40px;line-height:40px;font-family:'Liberation Mono', monospace;font-size:23px;color:#5e6168;white-space:pre;text-align:center;transform:scaleY(1.12)">16</div>
<div style="position:absolute;right:1517px;top:1655.0px;height:40px;line-height:40px;font-family:'Liberation Mono', monospace;font-size:23px;color:#d5d7dc;white-space:pre;text-align:right;transform:scaleY(1.12)">14225</div>
<div style="position:absolute;right:1187.5px;top:1655.0px;height:40px;line-height:40px;font-family:'Liberation Mono', monospace;font-size:23px;color:#d5d7dc;white-space:pre;text-align:right;transform:scaleY(1.12)">4</div>
<div style="position:absolute;right:872px;top:1655.0px;height:40px;line-height:40px;font-family:'Liberation Mono', monospace;font-size:23px;color:#d5d7dc;white-space:pre;text-align:right;transform:scaleY(1.12)">3</div>
<div style="position:absolute;right:557px;top:1655.0px;height:40px;line-height:40px;font-family:'Liberation Mono', monospace;font-size:23px;color:#d5d7dc;white-space:pre;text-align:right;transform:scaleY(1.12)">1</div>
<div style="position:absolute;left:2210px;top:1655.0px;height:40px;line-height:40px;font-family:'Liberation Mono', monospace;font-size:23px;font-weight:400;color:#d5d7dc;white-space:pre;transform:scaleY(1.12);">The Speech</div>
<div style="position:absolute;left:881px;top:1698px;width:1846px;height:1px;background:#393b40;border-radius:0px;"></div>
<div style="position:absolute;left:862.0px;width:100px;top:1699.5px;height:40px;line-height:40px;font-family:'Liberation Mono', monospace;font-size:23px;color:#5e6168;white-space:pre;text-align:center;transform:scaleY(1.12)">17</div>
<div style="position:absolute;right:1517px;top:1704.0px;height:40px;line-height:40px;font-family:'Liberation Mono', monospace;font-size:23px;color:#d5d7dc;white-space:pre;text-align:right;transform:scaleY(1.12)">14232</div>
<div style="position:absolute;right:1187.5px;top:1704.0px;height:40px;line-height:40px;font-family:'Liberation Mono', monospace;font-size:23px;color:#d5d7dc;white-space:pre;text-align:right;transform:scaleY(1.12)">5</div>
<div style="position:absolute;right:872px;top:1704.0px;height:40px;line-height:40px;font-family:'Liberation Mono', monospace;font-size:23px;color:#d5d7dc;white-space:pre;text-align:right;transform:scaleY(1.12)">3</div>
<div style="position:absolute;right:557px;top:1704.0px;height:40px;line-height:40px;font-family:'Liberation Mono', monospace;font-size:23px;color:#d5d7dc;white-space:pre;text-align:right;transform:scaleY(1.12)">1</div>
<div style="position:absolute;left:2210px;top:1704.0px;height:40px;line-height:40px;font-family:'Liberation Mono', monospace;font-size:23px;font-weight:400;color:#d5d7dc;white-space:pre;transform:scaleY(1.12);">Friendface</div>
<div style="position:absolute;left:881px;top:1747px;width:1846px;height:1px;background:#393b40;border-radius:0px;"></div>
<div style="position:absolute;left:862.0px;width:100px;top:1748.5px;height:40px;line-height:40px;font-family:'Liberation Mono', monospace;font-size:23px;color:#5e6168;white-space:pre;text-align:center;transform:scaleY(1.12)">18</div>
<div style="position:absolute;right:1517px;top:1753.0px;height:40px;line-height:40px;font-family:'Liberation Mono', monospace;font-size:23px;color:#d5d7dc;white-space:pre;text-align:right;transform:scaleY(1.12)">14239</div>
<div style="position:absolute;right:1187.5px;top:1753.0px;height:40px;line-height:40px;font-family:'Liberation Mono', monospace;font-size:23px;color:#d5d7dc;white-space:pre;text-align:right;transform:scaleY(1.12)">6</div>
<div style="position:absolute;right:872px;top:1753.0px;height:40px;line-height:40px;font-family:'Liberation Mono', monospace;font-size:23px;color:#d5d7dc;white-space:pre;text-align:right;transform:scaleY(1.12)">3</div>
<div style="position:absolute;right:557px;top:1753.0px;height:40px;line-height:40px;font-family:'Liberation Mono', monospace;font-size:23px;color:#d5d7dc;white-space:pre;text-align:right;transform:scaleY(1.12)">1</div>
<div style="position:absolute;left:2210px;top:1753.0px;height:40px;line-height:40px;font-family:'Liberation Mono', monospace;font-size:23px;font-weight:400;color:#d5d7dc;white-space:pre;transform:scaleY(1.12);">Calendar Geeks</div>
<div style="position:absolute;left:881px;top:1796px;width:1846px;height:1px;background:#393b40;border-radius:0px;"></div>
<div style="position:absolute;left:862.0px;width:100px;top:1797.5px;height:40px;line-height:40px;font-family:'Liberation Mono', monospace;font-size:23px;color:#5e6168;white-space:pre;text-align:center;transform:scaleY(1.12)">19</div>
<div style="position:absolute;right:1517px;top:1802.0px;height:40px;line-height:40px;font-family:'Liberation Mono', monospace;font-size:23px;color:#d5d7dc;white-space:pre;text-align:right;transform:scaleY(1.12)">14785</div>
<div style="position:absolute;right:1187.5px;top:1802.0px;height:40px;line-height:40px;font-family:'Liberation Mono', monospace;font-size:23px;color:#d5d7dc;white-space:pre;text-align:right;transform:scaleY(1.12)">1</div>
<div style="position:absolute;right:872px;top:1802.0px;height:40px;line-height:40px;font-family:'Liberation Mono', monospace;font-size:23px;color:#d5d7dc;white-space:pre;text-align:right;transform:scaleY(1.12)">4</div>
<div style="position:absolute;right:557px;top:1802.0px;height:40px;line-height:40px;font-family:'Liberation Mono', monospace;font-size:23px;color:#d5d7dc;white-space:pre;text-align:right;transform:scaleY(1.12)">1</div>
<div style="position:absolute;left:2210px;top:1802.0px;height:40px;line-height:40px;font-family:'Liberation Mono', monospace;font-size:23px;font-weight:400;color:#d5d7dc;white-space:pre;transform:scaleY(1.12);">Jen The Fredo</div>
<div style="position:absolute;left:881px;top:1845px;width:1846px;height:1px;background:#393b40;border-radius:0px;"></div>
<div style="position:absolute;left:862.0px;width:100px;top:1846.5px;height:40px;line-height:40px;font-family:'Liberation Mono', monospace;font-size:23px;color:#5e6168;white-space:pre;text-align:center;transform:scaleY(1.12)">20</div>
<div style="position:absolute;right:1517px;top:1851.0px;height:40px;line-height:40px;font-family:'Liberation Mono', monospace;font-size:23px;color:#d5d7dc;white-space:pre;text-align:right;transform:scaleY(1.12)">14792</div>
<div style="position:absolute;right:1187.5px;top:1851.0px;height:40px;line-height:40px;font-family:'Liberation Mono', monospace;font-size:23px;color:#d5d7dc;white-space:pre;text-align:right;transform:scaleY(1.12)">2</div>
<div style="position:absolute;right:872px;top:1851.0px;height:40px;line-height:40px;font-family:'Liberation Mono', monospace;font-size:23px;color:#d5d7dc;white-space:pre;text-align:right;transform:scaleY(1.12)">4</div>
<div style="position:absolute;right:557px;top:1851.0px;height:40px;line-height:40px;font-family:'Liberation Mono', monospace;font-size:23px;color:#d5d7dc;white-space:pre;text-align:right;transform:scaleY(1.12)">1</div>
<div style="position:absolute;left:2210px;top:1851.0px;height:40px;line-height:40px;font-family:'Liberation Mono', monospace;font-size:23px;font-weight:400;color:#d5d7dc;white-space:pre;transform:scaleY(1.12);">The Final Countdown</div>
<div style="position:absolute;left:881px;top:1894px;width:1846px;height:1px;background:#393b40;border-radius:0px;"></div>
<div style="position:absolute;left:942px;top:914px;width:1px;height:971px;background:#393b40;border-radius:0px;"></div>
<div style="position:absolute;left:1242px;top:914px;width:1px;height:971px;background:#393b40;border-radius:0px;"></div>
<div style="position:absolute;left:1572px;top:914px;width:1px;height:971px;background:#393b40;border-radius:0px;"></div>
<div style="position:absolute;left:1887px;top:914px;width:1px;height:971px;background:#393b40;border-radius:0px;"></div>
<div style="position:absolute;left:2202px;top:914px;width:1px;height:971px;background:#393b40;border-radius:0px;"></div>
<div style="position:absolute;left:2727px;top:865px;width:23px;height:1020px;background:#2b2d30;border-radius:0px;"></div>
<div style="position:absolute;left:2727px;top:865px;width:2px;height:1020px;background:#1e1f22;border-radius:0px;"></div>
<div style="position:absolute;left:2731px;top:916px;width:17px;height:249px;background:#4c4e52;border-radius:0px;"></div>
<div style="position:absolute;left:0px;top:1885px;width:2752px;height:57px;background:#2b2d30;border-radius:0px;"></div>
<div style="position:absolute;left:0px;top:1884px;width:2752px;height:1px;background:#1e1f22;border-radius:0px;"></div>
<div style="position:absolute;left:31px;top:1893.0px;height:40px;line-height:40px;font-family:'Liberation Sans', sans-serif;font-size:22px;font-weight:400;color:#a8abb0;white-space:pre;">Database Consoles</div>
<div style="position:absolute;left:271px;top:1893.0px;height:40px;line-height:40px;font-family:'Liberation Sans', sans-serif;font-size:22px;font-weight:400;color:#a8abb0;white-space:pre;">YDB</div>
<div style="position:absolute;left:403px;top:1893.0px;height:40px;line-height:40px;font-family:'Liberation Sans', sans-serif;font-size:22px;font-weight:400;color:#a8abb0;white-space:pre;">console</div>
<div style="position:absolute;left:2271px;top:1893.0px;height:40px;line-height:40px;font-family:'Liberation Sans', sans-serif;font-size:22px;font-weight:400;color:#a8abb0;white-space:pre;">1:23</div>
<div style="position:absolute;left:2344px;top:1893.0px;height:40px;line-height:40px;font-family:'Liberation Sans', sans-serif;font-size:22px;font-weight:400;color:#a8abb0;white-space:pre;">LF</div>
<div style="position:absolute;left:2401px;top:1893.0px;height:40px;line-height:40px;font-family:'Liberation Sans', sans-serif;font-size:22px;font-weight:400;color:#a8abb0;white-space:pre;">UTF-8</div>
<div style="position:absolute;left:2497px;top:1893.0px;height:40px;line-height:40px;font-family:'Liberation Sans', sans-serif;font-size:22px;font-weight:400;color:#a8abb0;white-space:pre;">4 spaces</div>
<svg style="position:absolute;left:0;top:0" width="2752" height="1944" viewBox="0 0 2752 1944" fill="none" stroke-linecap="round" stroke-linejoin="round"><path d="M26 38.5L29 36L32.5 38.5L32.5 52L45 52L48 55L46.5 57.8L27.5 57.8L26 56.5Z" stroke="none" stroke-width="0" fill="#00d886" /><path d="M29 31L30.5 29L38 29L41 32.5L32.5 32.5L32.5 40L29 37.5Z" stroke="none" stroke-width="0" fill="#ff45ed" /><path d="M39 29.5L43 26L54.5 26L55.5 28L57 43L51.8 42L51.8 32.5L41 32.5Z" stroke="none" stroke-width="0" fill="#7b55ff" /><path d="M51.8 40L57 43.5L58 54L56 56.5L50 56.5L46 53L51.8 52Z" stroke="none" stroke-width="0" fill="#ff45ed" /><rect x="32.3" y="32.3" width="19.6" height="19.6" fill="#000"/><text x="34" y="42.3" font-family="Liberation Sans" font-weight="700" font-size="10.4" fill="#fff" textLength="15.2" lengthAdjust="spacingAndGlyphs">DG</text><rect x="34.3" y="47.9" width="8.3" height="1.8" fill="#fff"/><path d="M137.5 28.7L166.5 28.7" stroke="#dfe1e5" stroke-width="2.6" fill="none" /><path d="M137.5 37.6L166.5 37.6" stroke="#dfe1e5" stroke-width="2.6" fill="none" /><path d="M137.5 46.5L166.5 46.5" stroke="#dfe1e5" stroke-width="2.6" fill="none" /><path d="M137.5 55.4L166.5 55.4" stroke="#dfe1e5" stroke-width="2.6" fill="none" /><path d="M312 43L320 51L328 43" stroke="#ced0d6" stroke-width="2" fill="none" /><path d="M529 43L537 51L545 43" stroke="#ced0d6" stroke-width="2" fill="none" /><path d="M1180.5 37a15.5 5.5 0 0 0 31 0a15.5 5.5 0 0 0-31 0" stroke="#ced0d6" stroke-width="2.6" fill="none" /><path d="M1180.5 37V57a15.5 5.5 0 0 0 31 0V37M1180.5 43.7a15.5 5.5 0 0 0 31 0M1180.5 50.3a15.5 5.5 0 0 0 31 0" stroke="#ced0d6" stroke-width="2.6" fill="none" /><path d="M1286.5 32H1305.5L1313.5 47L1305.5 62H1286.5L1278.5 47Z" stroke="#ced0d6" stroke-width="2.6" fill="none" /><path d="M1291.8 40.5V54L1304.5 47.3Z" stroke="#ced0d6" stroke-width="2.6" fill="none" /><path d="M1378.5 36.5a3 3 0 0 1 3-3H1388.5L1393 38H1410.5a3 3 0 0 1 3 3V58.5a3 3 0 0 1-3 3H1381.5a3 3 0 0 1-3-3Z" stroke="#ced0d6" stroke-width="2.6" fill="none" /><circle cx="1483" cy="47" r="3" stroke="none" stroke-width="0" fill="#ced0d6"/><circle cx="1496" cy="47" r="3" stroke="none" stroke-width="0" fill="#ced0d6"/><circle cx="1509" cy="47" r="3" stroke="none" stroke-width="0" fill="#ced0d6"/><circle cx="2342.5" cy="44.5" r="12.5" stroke="#ced0d6" stroke-width="2.6" fill="none"/><path d="M2351.5 53.5L2360.5 62.5" stroke="#ced0d6" stroke-width="2.6" fill="none" /><path d="M2440.67 31.35L2447.33 31.35L2447.77 35.4L2452.16 37.93L2455.89 36.29L2459.22 42.06L2455.93 44.46L2455.93 49.54L2459.22 51.94L2455.89 57.71L2452.16 56.07L2447.77 58.6L2447.33 62.65L2440.67 62.65L2440.23 58.6L2435.84 56.07L2432.11 57.71L2428.78 51.94L2432.07 49.54L2432.07 44.46L2428.78 42.06L2432.11 36.29L2435.84 37.93L2440.23 35.4Z" stroke="#ced0d6" stroke-width="2.6" fill="none" /><circle cx="2444" cy="47" r="4.8" stroke="#ced0d6" stroke-width="2.6" fill="none"/><path d="M2539 37L2550 48L2561 37" stroke="#ced0d6" stroke-width="2" fill="none" /><path d="M2619 47L2630 36L2641 47" stroke="#ced0d6" stroke-width="2" fill="none" /><circle cx="2710" cy="42" r="18" stroke="none" stroke-width="0" fill="#f0f1f2"/><path d="M2703 35L2717 49M2717 35L2703 49" stroke="#2b2d30" stroke-width="2.4" fill="none" /><path d="M41 188L41 212.5" stroke="#ced0d6" stroke-width="2" fill="none" /><path d="M29 200L53 200" stroke="#ced0d6" stroke-width="2" fill="none" /><path d="M51.2 218L59.2 218L59.2 210Z" fill="#ced0d6" stroke="none"/><path d="M83 192a11 4.5 0 0 0 22 0a11 4.5 0 0 0-22 0" stroke="#ced0d6" stroke-width="2" fill="none" /><path d="M83 192V208.5a11 4.5 0 0 0 11 4.5M83 197.5a11 4.5 0 0 0 11 4.5M83 203a11 4.5 0 0 0 11 4.5M105 192V198" stroke="#ced0d6" stroke-width="2" fill="none" /><path d="M100.06 201.24L103.94 201.24L103.85 203.29L106.01 204.54L107.75 203.44L109.69 206.79L107.87 207.75L107.87 210.25L109.69 211.21L107.75 214.56L106.01 213.46L103.85 214.71L103.94 216.76L100.06 216.76L100.15 214.71L97.99 213.46L96.25 214.56L94.31 211.21L96.13 210.25L96.13 207.75L94.31 206.79L96.25 203.44L97.99 204.54L100.15 203.29Z" stroke="#548af7" stroke-width="2" fill="#25324d" /><circle cx="102" cy="209" r="1.2" stroke="#548af7" stroke-width="2" fill="none"/><circle cx="102" cy="209" r="1.6" stroke="none" stroke-width="0" fill="#548af7"/><path d="M166.5 192.8A12 12 0 0 0 148.6 202" stroke="#ced0d6" stroke-width="2" fill="none" /><path d="M144.5 199L148.8 204.4L154.1 199.1" stroke="#ced0d6" stroke-width="2" fill="none" /><path d="M153.5 209.7A12 12 0 0 0 172.2 200.6" stroke="#ced0d6" stroke-width="2" fill="none" /><path d="M167 202.6L171.8 197.4L175.9 202.6" stroke="#ced0d6" stroke-width="2" fill="none" /><path d="M209.4 212.6H204.6a4 4 0 0 1-4-4V193.7a4 4 0 0 1 4-4H219.5a4 4 0 0 1 4 4V202.6" stroke="#e55765" stroke-width="2" fill="none" /><path d="M224.7 207H219.5a4.3 4.3 0 0 0 0 8.6H224.7ZM224.7 209.2H227.6M224.7 213.3H227.6M214.5 211.3H212.4" stroke="#ced0d6" stroke-width="2" fill="none" /><rect x="265" y="190.5" width="27" height="22" rx="3.5" stroke="#ced0d6" stroke-width="2" fill="none"/><path d="M265 195.5L292 195.5" stroke="#ced0d6" stroke-width="2" fill="none" /><path d="M271 200L278.8 203.8L271 208Z" stroke="#ced0d6" stroke-width="2" fill="none" /><rect x="317" y="190" width="26" height="22" rx="4" stroke="#ced0d6" stroke-width="2" fill="none"/><path d="M317 194H343M325 190V212M335.5 190V212" stroke="#ced0d6" stroke-width="2" fill="none" /><path d="M449 193.8L466 193.8" stroke="#ced0d6" stroke-width="2" fill="none" /><path d="M455.3 187.4L449 193.8L455.3 200.3" stroke="#ced0d6" stroke-width="2" fill="none" /><path d="M434 208L451.8 208" stroke="#ced0d6" stroke-width="2" fill="none" /><path d="M444.5 201.8L451 208L444.5 214.4" stroke="#ced0d6" stroke-width="2" fill="none" /><path d="M501.6 200.9C508.02 188.1 524.38 188.1 530.8 200.9C524.38 213.7 508.02 213.7 501.6 200.9Z" stroke="#ced0d6" stroke-width="2" fill="none" /><circle cx="516.2" cy="200.9" r="5" stroke="#ced0d6" stroke-width="2" fill="none"/><path d="M524.9 218L532.9 218L532.9 210Z" fill="#ced0d6" stroke="none"/><path d="M14.2 245H29.8M18.5 245V249M24.6 245V249" stroke="#dfe1e5" stroke-width="2" fill="none" stroke-linecap="butt"/><path d="M11 248V264M11 253.1H15M11 258.8H15" stroke="#dfe1e5" stroke-width="2" fill="none" stroke-linecap="butt"/><path d="M33 248V264M29 253.1H33M29 258.8H33" stroke="#548af7" stroke-width="2" fill="none" stroke-linecap="butt"/><path d="M14.2 267H29.8M18.5 263V267M24.6 263V267" stroke="#548af7" stroke-width="2" fill="none" stroke-linecap="butt"/><circle cx="34" cy="268" r="4.2" fill="#0be112"/><path d="M186 305L194 313L202 305" stroke="#ced0d6" stroke-width="2" fill="none" /><rect x="223" y="297" width="26" height="22" rx="4" stroke="#ced0d6" stroke-width="2" fill="#43454a"/><path d="M223 303H249M231 297V319M241 297V319" stroke="#ced0d6" stroke-width="2" fill="none" /><path d="M224 353L232 361L240 353" stroke="#ced0d6" stroke-width="2" fill="none" /><path d="M261 349.5a3.5 3.5 0 0 1 3.5-3.5H270.5L274 350H283.5a3.5 3.5 0 0 1 3.5 3.5V364.5a3.5 3.5 0 0 1-3.5 3.5H264.5a3.5 3.5 0 0 1-3.5-3.5Z" stroke="#548af7" stroke-width="2" fill="#25324d" /><rect x="300" y="394.5" width="6" height="20" fill="#43454a"/><path d="M325 401V397a3.5 3.5 0 0 0-3.5-3.5H302.5a3.5 3.5 0 0 0-3.5 3.5v15a3.5 3.5 0 0 0 3.5 3.5H320" stroke="#ced0d6" stroke-width="2" fill="none" /><path d="M307 393.5L307 415.5" stroke="#ced0d6" stroke-width="2" fill="none" /><circle cx="323" cy="406.8" r="4" stroke="#ffd152" stroke-width="2" fill="none"/><path d="M323 410.8V420.5M323 417.5H328" stroke="#ffd152" stroke-width="2" fill="none" /><rect x="300" y="442.5" width="6" height="20" fill="#43454a"/><path d="M325 449V445a3.5 3.5 0 0 0-3.5-3.5H302.5a3.5 3.5 0 0 0-3.5 3.5v15a3.5 3.5 0 0 0 3.5 3.5H320" stroke="#ced0d6" stroke-width="2" fill="none" /><path d="M307 441.5L307 463.5" stroke="#ced0d6" stroke-width="2" fill="none" /><circle cx="323" cy="454.8" r="4" stroke="#ffd152" stroke-width="2" fill="none"/><path d="M323 458.8V468.5M323 465.5H328" stroke="#ffd152" stroke-width="2" fill="none" /><rect x="300" y="490.5" width="6" height="20" fill="#43454a"/><path d="M325 497V493a3.5 3.5 0 0 0-3.5-3.5H302.5a3.5 3.5 0 0 0-3.5 3.5v15a3.5 3.5 0 0 0 3.5 3.5H320" stroke="#ced0d6" stroke-width="2" fill="none" /><path d="M307 489.5L307 511.5" stroke="#ced0d6" stroke-width="2" fill="none" /><circle cx="323" cy="502.8" r="4" stroke="#ffd152" stroke-width="2" fill="none"/><path d="M323 506.8V516.5M323 513.5H328" stroke="#ffd152" stroke-width="2" fill="none" /><rect x="300" y="538.5" width="6" height="20" fill="#43454a"/><rect x="299" y="537.5" width="26" height="22" rx="3.5" stroke="#ced0d6" stroke-width="2" fill="none"/><path d="M307 537.5L307 559.5" stroke="#ced0d6" stroke-width="2" fill="none" /><rect x="300" y="586.5" width="6" height="20" fill="#43454a"/><rect x="299" y="585.5" width="26" height="22" rx="3.5" stroke="#ced0d6" stroke-width="2" fill="none"/><path d="M307 585.5L307 607.5" stroke="#ced0d6" stroke-width="2" fill="none" /><path d="M799.2 113H814.8M803.5 113V117M809.6 113V117" stroke="#dfe1e5" stroke-width="2" fill="none" stroke-linecap="butt"/><path d="M796 116V132M796 121.1H800M796 126.8H800" stroke="#dfe1e5" stroke-width="2" fill="none" stroke-linecap="butt"/><path d="M818 116V132M814 121.1H818M814 126.8H818" stroke="#548af7" stroke-width="2" fill="none" stroke-linecap="butt"/><path d="M799.2 135H814.8M803.5 131V135M809.6 131V135" stroke="#548af7" stroke-width="2" fill="none" stroke-linecap="butt"/><path d="M934.5 118.5L947.5 131.5M947.5 118.5L934.5 131.5" stroke="#7d8087" stroke-width="2" fill="none" /><rect x="999" y="113" width="26" height="22" rx="4" stroke="#b4b6bc" stroke-width="2" fill="#393b40"/><path d="M999 119H1025M1007 113V135M1017 113V135" stroke="#b4b6bc" stroke-width="2" fill="none" /><rect x="1216" y="113" width="26" height="22" rx="4" stroke="#b4b6bc" stroke-width="2" fill="#393b40"/><path d="M1216 119H1242M1224 113V135M1234 113V135" stroke="#b4b6bc" stroke-width="2" fill="none" /><circle cx="2291.5" cy="113" r="2.6" stroke="none" stroke-width="0" fill="#ced0d6"/><circle cx="2291.5" cy="124" r="2.6" stroke="none" stroke-width="0" fill="#ced0d6"/><circle cx="2291.5" cy="135" r="2.6" stroke="none" stroke-width="0" fill="#ced0d6"/><path d="M797.5 190.3a2 2 0 0 1 3-1.7L817.4 198a2 2 0 0 1 0 3.4L800.5 211a2 2 0 0 1-3-1.7Z" stroke="#57a05e" stroke-width="2.2" fill="#233025" /><circle cx="872.9" cy="199.9" r="12.5" stroke="#ced0d6" stroke-width="2" fill="none"/><path d="M872.9 193.5V201.5L878.2 203.6" stroke="#ced0d6" stroke-width="2" fill="none" /><circle cx="924.9" cy="199.9" r="12.5" stroke="#ced0d6" stroke-width="2" fill="none"/><path d="M921.3 207.4V194.4M921.3 198.5a4.2 4.2 0 1 0 8.4 0a4.2 4.2 0 1 0-8.4 0" stroke="#ced0d6" stroke-width="2" fill="none" /><path d="M974.51 188.26L979.49 188.26L979.84 191.25L983.16 193.16L985.92 191.97L988.41 196.29L986 198.09L986 201.91L988.41 203.71L985.92 208.03L983.16 206.84L979.84 208.75L979.49 211.74L974.51 211.74L974.16 208.75L970.84 206.84L968.08 208.03L965.59 203.71L968 201.91L968 198.09L965.59 196.29L968.08 191.97L970.84 193.16L974.16 191.25Z" stroke="#ced0d6" stroke-width="2" fill="none" /><circle cx="977" cy="200" r="4.3" stroke="#ced0d6" stroke-width="2" fill="none"/><path d="M1030 189.3L1056.5 189.3" stroke="#ced0d6" stroke-width="2" fill="none" /><path d="M1030 210.7L1056.5 210.7" stroke="#ced0d6" stroke-width="2" fill="none" /><rect x="1030.4" y="193.6" width="26" height="13.8" rx="3.5" stroke="#ced0d6" stroke-width="2" fill="none"/><path d="M1030.4 200H1056.4M1038.3 193.6V207.4M1048.3 193.6V207.4" stroke="#ced0d6" stroke-width="2" fill="none" /><path d="M1181 197.85L1189 206.15L1197 197.85" stroke="#ced0d6" stroke-width="2" fill="none" /><path d="M1416 197.85L1424 206.15L1432 197.85" stroke="#ced0d6" stroke-width="2" fill="none" /><rect x="2153.2" y="199.3" width="11.5" height="11.3" rx="2" stroke="#ced0d6" stroke-width="2" fill="#43454a"/><rect x="2171.9" y="189.2" width="7" height="7.3" rx="2" stroke="#ced0d6" stroke-width="2" fill="#43454a"/><rect x="2171.9" y="203.7" width="7" height="7.9" rx="2" stroke="#ced0d6" stroke-width="2" fill="#43454a"/><path d="M2159.2 199.3V194H2171.9M2164.7 206.5H2171.9" stroke="#ced0d6" stroke-width="2" fill="none" /><path d="M2286.35 198.1L2294 205.9L2301.65 198.1" stroke="#ced0d6" stroke-width="2" fill="none" /><path d="M828 257.5L834.5 264L846.5 251" stroke="#5c9e62" stroke-width="3" fill="none" /><path d="M1007.2 256.3V249.5M1007.2 256.3L1001.6 253.6M1007.2 256.3L1012.8 253.6M1007.2 256.3L1003.8 260.9M1007.2 256.3L1010.6 260.9" stroke="#f2be5c" stroke-width="2.8" fill="none" /><path d="M2295 259L2301.5 265.5L2316 251" stroke="#5c9e62" stroke-width="3" fill="none" /><path d="M2421.5 123.25L2429 130.75L2436.5 123.25" stroke="#ced0d6" stroke-width="2" fill="none" /><path d="M2365.15 195.1L2373 203.3L2380.85 195.1" stroke="#ced0d6" stroke-width="2" fill="none" /><path d="M2402.2 191a3 3 0 0 1 3-3H2411.5L2415 192.5H2425a3 3 0 0 1 3 3V207a3 3 0 0 1-3 3H2405.2a3 3 0 0 1-3-3Z" stroke="#ced0d6" stroke-width="2" fill="none" /><path d="M2368.25 239.5L2376.55 247L2368.25 254.5" stroke="#ced0d6" stroke-width="2" fill="none" /><path d="M2403.5 238H2415M2403.5 244H2417.5M2403.5 250H2427M2403.5 256H2419" stroke="#dfe1e5" stroke-width="2.2" fill="none" /><circle cx="2424" cy="237.8" r="7.2" stroke="none" stroke-width="0" fill="#548af7"/><path d="M2423.3 232.5V238L2426.8 240.8" stroke="#1e1f22" stroke-width="1.6" fill="none" /><circle cx="2656" cy="655" r="2.6" stroke="none" stroke-width="0" fill="#ced0d6"/><circle cx="2656" cy="665" r="2.6" stroke="none" stroke-width="0" fill="#ced0d6"/><circle cx="2656" cy="675" r="2.6" stroke="none" stroke-width="0" fill="#ced0d6"/><path d="M46.2 751.8L54.2 751.8L54.2 743.8Z" fill="#ced0d6" stroke="none"/><path d="M131.8 728L131.8 752" stroke="#ced0d6" stroke-width="2" fill="none" /><path d="M120 739.8L144 739.8" stroke="#ced0d6" stroke-width="2" fill="none" /><path d="M142.2 757.6L150.2 757.6L150.2 749.6Z" fill="#ced0d6" stroke="none"/><path d="M170.4 740.9C176.87 728.1 193.33 728.1 199.8 740.9C193.33 753.7 176.87 753.7 170.4 740.9Z" stroke="#ced0d6" stroke-width="2" fill="none" /><circle cx="185.1" cy="740.9" r="5.3" stroke="#ced0d6" stroke-width="2" fill="none"/><path d="M194 757.6L202 757.6L202 749.6Z" fill="#ced0d6" stroke="none"/><path d="M234.5 732.5H227.5a3 3 0 0 0-3 3V746.3a3 3 0 0 0 3 3H242.7a3 3 0 0 0 3-3V743M246 725.8V738M239.8 731.9H252.2" stroke="#ced0d6" stroke-width="2" fill="none" /><path d="M295.35 736.2L303.2 728.8L311.05 736.2" stroke="#ced0d6" stroke-width="2" fill="none" /><path d="M295.35 745.6L303.2 753.4L311.05 745.6" stroke="#ced0d6" stroke-width="2" fill="none" /><path d="M347.15 729.35L355 737.25L362.85 729.35" stroke="#ced0d6" stroke-width="2" fill="none" /><path d="M347.15 752.55L355 744.45L362.85 752.55" stroke="#ced0d6" stroke-width="2" fill="none" /><path d="M110.5 805L118.5 813L126.5 805" stroke="#ced0d6" stroke-width="2" fill="none" /><path d="M148 800.5a3.5 3.5 0 0 1 3.5-3.5H157.5L161 801H170.5a3.5 3.5 0 0 1 3.5 3.5V815.5a3.5 3.5 0 0 1-3.5 3.5H151.5a3.5 3.5 0 0 1-3.5-3.5Z" stroke="#ced0d6" stroke-width="2" fill="#43454a" /><path d="M149 853L157 861L165 853" stroke="#ced0d6" stroke-width="2" fill="none" /><path d="M191.7 846H207.3M196 846V850M202.1 846V850" stroke="#dfe1e5" stroke-width="2" fill="none" stroke-linecap="butt"/><path d="M188.5 849V865M188.5 854.1H192.5M188.5 859.8H192.5" stroke="#dfe1e5" stroke-width="2" fill="none" stroke-linecap="butt"/><path d="M210.5 849V865M206.5 854.1H210.5M206.5 859.8H210.5" stroke="#548af7" stroke-width="2" fill="none" stroke-linecap="butt"/><path d="M191.7 868H207.3M196 864V868M202.1 864V868" stroke="#548af7" stroke-width="2" fill="none" stroke-linecap="butt"/><rect x="222.3" y="900.6" width="5.2" height="7" rx="1" stroke="#ced0d6" stroke-width="2" fill="none"/><path d="M244.5 894.3H237a9.6 9.6 0 0 0 0 19.3H244.5Z" stroke="#ced0d6" stroke-width="2" fill="none" /><path d="M244.5 898.2H252M244.5 908.6H252" stroke="#ced0d6" stroke-width="2" fill="none" /><circle cx="248.9" cy="916.6" r="4.2" fill="#0be112"/><path d="M187 948.5L195 956.5L203 948.5" stroke="#ced0d6" stroke-width="2" fill="none" /><rect x="222.3" y="949.1" width="5.2" height="7" rx="1" stroke="#ced0d6" stroke-width="2" fill="none"/><path d="M244.5 942.8H237a9.6 9.6 0 0 0 0 19.3H244.5Z" stroke="#ced0d6" stroke-width="2" fill="none" /><path d="M244.5 946.7H252M244.5 957.1H252" stroke="#ced0d6" stroke-width="2" fill="none" /><circle cx="248.9" cy="965.1" r="4.2" fill="#0be112"/><rect x="262" y="989.3" width="26" height="22" rx="4" stroke="#ced0d6" stroke-width="2" fill="#43454a"/><path d="M262 995.3H288M270 989.3V1011.3M280 989.3V1011.3" stroke="#ced0d6" stroke-width="2" fill="none" /><path d="M187 1045L195 1053L203 1045" stroke="#ced0d6" stroke-width="2" fill="none" /><rect x="222.3" y="1045.6" width="5.2" height="7" rx="1" stroke="#ced0d6" stroke-width="2" fill="none"/><path d="M244.5 1039.3H237a9.6 9.6 0 0 0 0 19.3H244.5Z" stroke="#ced0d6" stroke-width="2" fill="none" /><path d="M244.5 1043.2H252M244.5 1053.6H252" stroke="#ced0d6" stroke-width="2" fill="none" /><circle cx="248.9" cy="1061.6" r="4.2" fill="#0be112"/><rect x="262" y="1085.5" width="26" height="22" rx="4" stroke="#ced0d6" stroke-width="2" fill="#43454a"/><path d="M262 1091.5H288M270 1085.5V1107.5M280 1085.5V1107.5" stroke="#ced0d6" stroke-width="2" fill="none" /><path d="M187 1140.6L195 1148.6L203 1140.6" stroke="#ced0d6" stroke-width="2" fill="none" /><rect x="222.3" y="1141.2" width="5.2" height="7" rx="1" stroke="#ced0d6" stroke-width="2" fill="none"/><path d="M244.5 1134.9H237a9.6 9.6 0 0 0 0 19.3H244.5Z" stroke="#ced0d6" stroke-width="2" fill="none" /><path d="M244.5 1138.8H252M244.5 1149.2H252" stroke="#ced0d6" stroke-width="2" fill="none" /><circle cx="248.9" cy="1157.2" r="4.2" fill="#0be112"/><path d="M267.2 1181H282.8M271.5 1181V1185M277.6 1181V1185" stroke="#dfe1e5" stroke-width="2" fill="none" stroke-linecap="butt"/><path d="M264 1184V1200M264 1189.1H268M264 1194.8H268" stroke="#dfe1e5" stroke-width="2" fill="none" stroke-linecap="butt"/><path d="M286 1184V1200M282 1189.1H286M282 1194.8H286" stroke="#548af7" stroke-width="2" fill="none" stroke-linecap="butt"/><path d="M267.2 1203H282.8M271.5 1199V1203M277.6 1199V1203" stroke="#548af7" stroke-width="2" fill="none" stroke-linecap="butt"/><rect x="908.2" y="731.4" width="25.5" height="21" rx="3.5" stroke="#ced0d6" stroke-width="2" fill="#43454a"/><path d="M913.2 738.5L917 742L913.2 745.5M921.5 747H927.5" stroke="#ced0d6" stroke-width="2" fill="none" /><circle cx="918.2" cy="750.7" r="7.2" stroke="none" stroke-width="0" fill="#f2c55c"/><path d="M918.2 746.2V754.5M914.8 751.2L918.2 754.5L921.6 751.2" stroke="#1e1f22" stroke-width="1.7" fill="none" /><rect x="1067" y="731" width="26" height="22" rx="4" stroke="#ced0d6" stroke-width="2" fill="#43454a"/><path d="M1067 736.5H1093M1074.5 731V753M1085.5 731V753" stroke="#ced0d6" stroke-width="2" fill="none" /><path d="M1215.5 735.5L1228.5 748.5M1228.5 735.5L1215.5 748.5" stroke="#7a7e85" stroke-width="2" fill="none" /><rect x="922" y="810" width="26" height="22" rx="4" stroke="#ced0d6" stroke-width="2" fill="none"/><path d="M922 816H948M930.5 810V832M939.5 810V832" stroke="#ced0d6" stroke-width="2" fill="none" /><path d="M974 810V831H1001" stroke="#ced0d6" stroke-width="2" fill="none" /><path d="M975.5 826.5L982 815.5L990 824L1000.4 814" stroke="#ced0d6" stroke-width="2" fill="none" /><circle cx="982" cy="815.5" r="2.6" stroke="#ced0d6" stroke-width="2" fill="#2b2d30"/><circle cx="990" cy="824" r="2.6" stroke="#ced0d6" stroke-width="2" fill="#2b2d30"/><circle cx="1000.4" cy="814" r="2.6" stroke="#ced0d6" stroke-width="2" fill="#2b2d30"/><path d="M1045 811L1045 831" stroke="#5c5e63" stroke-width="2" fill="none" /><path d="M1062 811L1052 821L1062 831" stroke="#5c5e63" stroke-width="2" fill="none" /><path d="M1109.5 811L1099.5 821L1109.5 831" stroke="#5c5e63" stroke-width="2" fill="none" /><path d="M1218.5 818.5L1226.5 826.5L1234.5 818.5" stroke="#ced0d6" stroke-width="2" fill="none" /><path d="M1269 811L1279 821L1269 831" stroke="#5c5e63" stroke-width="2" fill="none" /><path d="M1317 811L1327 821L1317 831" stroke="#5c5e63" stroke-width="2" fill="none" /><path d="M1332.4 811L1332.4 831" stroke="#5c5e63" stroke-width="2" fill="none" /><path d="M1397 810.5A11 11 0 0 0 1379.6 819.5" stroke="#ced0d6" stroke-width="2" fill="none" /><path d="M1375.5 819.4L1379.6 824.3L1385.3 819" stroke="#ced0d6" stroke-width="2" fill="none" /><path d="M1385.3 831A11 11 0 0 0 1402 821.4" stroke="#ced0d6" stroke-width="2" fill="none" /><path d="M1397 822.3L1402 817.4L1406.9 822.3" stroke="#ced0d6" stroke-width="2" fill="none" /><circle cx="1443.1" cy="821" r="12.7" stroke="#ced0d6" stroke-width="2" fill="none"/><path d="M1443.1 815.3V822.3L1448 824.3" stroke="#ced0d6" stroke-width="2" fill="none" /><path d="M1452.2 838L1460.2 838L1460.2 830Z" fill="#ced0d6" stroke="none"/><path d="M1560 808L1560 832" stroke="#ced0d6" stroke-width="2" fill="none" /><path d="M1547.5 820L1572.5 820" stroke="#ced0d6" stroke-width="2" fill="none" /><path d="M1600 820L1624 820" stroke="#5c5e63" stroke-width="2" fill="none" /><path d="M1659.7 809.5L1652.8 816.5L1659.7 823.5M1652.8 816.5H1668a10 7.5 0 0 1 0 15H1660" stroke="#5c5e63" stroke-width="2" fill="none" /><path d="M1702.5 820.8C1707 812.5 1713 810 1717 810S1727 812.5 1731.5 820.8M1702.5 820.8C1706 827 1710 830 1714 831" stroke="#5c5e63" stroke-width="2" fill="none" /><path d="M1722 821.5a5.5 5.5 0 1 0-9.5 2.5" stroke="#5c5e63" stroke-width="2" fill="none" /><path d="M1716.6 829.2L1724.9 821.4L1733.3 829.2H1728.3V836.6H1721.4V829.2Z" fill="#5c5e63"/><path d="M1769.2 809.6L1758.3 820.4H1765.3V832.2H1773.1V820.4H1780.3Z" stroke="#5c5e63" stroke-width="2" fill="none" /><path d="M1906.9 819.05L1915 826.95L1923.1 819.05" stroke="#5c5e63" stroke-width="2" fill="none" /><path d="M2046.5 810.3H2059.5M2048.5 810.3V816L2044.3 825.8H2061.8L2057.5 816V810.3M2053 825.8V834.5" stroke="#ced0d6" stroke-width="2" fill="none" /><circle cx="2102.9" cy="819.4" r="9.3" stroke="#ced0d6" stroke-width="2" fill="none"/><path d="M2109.6 826.1L2116.2 832.7" stroke="#ced0d6" stroke-width="2" fill="none" /><rect x="2145" y="811" width="6" height="20" fill="#393b40"/><path d="M2170 820V813a3 3 0 0 0-3-3H2147a3 3 0 0 0-3 3V828.7a3 3 0 0 0 3 3H2156M2151 810V831.7" stroke="#ced0d6" stroke-width="2" fill="none" /><path d="M2156 822.3H2172.4L2166.2 829.6V836.3H2162.2V829.6Z" stroke="#548af7" stroke-width="2" fill="none" /><path d="M2402.35 819.05L2410 826.95L2417.65 819.05" stroke="#ced0d6" stroke-width="2" fill="none" /><path d="M2474.1 810V826M2467.2 820L2474.1 826.3L2481 820M2463.4 825V832H2485V825" stroke="#ced0d6" stroke-width="2" fill="none" /><path d="M2526 826V810.5M2519 816.5L2526 809.8L2533 816.5M2515.3 825V832H2537V825" stroke="#ced0d6" stroke-width="2" fill="none" /><path d="M2578 813.9L2593.5 813.9" stroke="#ced0d6" stroke-width="2" fill="none" /><path d="M2584 807.6L2577.6 813.9L2584 820.2" stroke="#ced0d6" stroke-width="2" fill="none" /><path d="M2562.2 828.2L2578.4 828.2" stroke="#ced0d6" stroke-width="2" fill="none" /><path d="M2572.5 821.6L2578.8 828.2L2572.5 834.5" stroke="#ced0d6" stroke-width="2" fill="none" /><path d="M2587.3 837.6L2595.3 837.6L2595.3 829.6Z" fill="#ced0d6" stroke="none"/><path d="M2629.6 820.8C2636.07 808.53 2652.53 808.53 2659 820.8C2652.53 833.07 2636.07 833.07 2629.6 820.8Z" stroke="#ced0d6" stroke-width="2" fill="none" /><circle cx="2644.3" cy="820.8" r="5" stroke="#ced0d6" stroke-width="2" fill="none"/><path d="M2653.4 837.6L2661.4 837.6L2661.4 829.6Z" fill="#ced0d6" stroke="none"/><path d="M2693.44 808.77L2698.56 808.77L2698.9 811.86L2702.29 813.81L2705.14 812.57L2707.7 817L2705.19 818.85L2705.19 822.75L2707.7 824.6L2705.14 829.03L2702.29 827.79L2698.9 829.74L2698.56 832.83L2693.44 832.83L2693.1 829.74L2689.71 827.79L2686.86 829.03L2684.3 824.6L2686.81 822.75L2686.81 818.85L2684.3 817L2686.86 812.57L2689.71 813.81L2693.1 811.86Z" stroke="#ced0d6" stroke-width="2" fill="none" /><circle cx="2696" cy="820.8" r="4.4" stroke="#ced0d6" stroke-width="2" fill="none"/><path d="M2705.2 837.6L2713.2 837.6L2713.2 829.6Z" fill="#ced0d6" stroke="none"/><rect x="955" y="879" width="6" height="20" fill="#43454a"/><rect x="954" y="878" width="26" height="22" rx="3.5" stroke="#ced0d6" stroke-width="2" fill="none"/><path d="M962 878L962 900" stroke="#ced0d6" stroke-width="2" fill="none" /><path d="M1118 879H1140L1132 890V900L1128 898V890Z" stroke="#ced0d6" stroke-width="2" fill="none" /><path d="M1209 882.5L1214 888H1204Z M1209 897.5L1204 892H1214Z" fill="#b4b6bc"/><rect x="1255" y="879" width="6" height="20" fill="#43454a"/><path d="M1280 885.5V881.5a3.5 3.5 0 0 0-3.5-3.5H1257.5a3.5 3.5 0 0 0-3.5 3.5v15a3.5 3.5 0 0 0 3.5 3.5H1275" stroke="#ced0d6" stroke-width="2" fill="none" /><path d="M1262 878L1262 900" stroke="#ced0d6" stroke-width="2" fill="none" /><circle cx="1278" cy="891.3" r="4" stroke="#ffd152" stroke-width="2" fill="none"/><path d="M1278 895.3V905M1278 902H1283" stroke="#ffd152" stroke-width="2" fill="none" /><path d="M1446 879H1468L1460 890V900L1456 898V890Z" stroke="#ced0d6" stroke-width="2" fill="none" /><path d="M1538 882.5L1543 888H1533Z M1538 897.5L1533 892H1543Z" fill="#b4b6bc"/><rect x="1585" y="879" width="6" height="20" fill="#43454a"/><path d="M1610 885.5V881.5a3.5 3.5 0 0 0-3.5-3.5H1587.5a3.5 3.5 0 0 0-3.5 3.5v15a3.5 3.5 0 0 0 3.5 3.5H1605" stroke="#ced0d6" stroke-width="2" fill="none" /><path d="M1592 878L1592 900" stroke="#ced0d6" stroke-width="2" fill="none" /><circle cx="1608" cy="891.3" r="4" stroke="#ffd152" stroke-width="2" fill="none"/><path d="M1608 895.3V905M1608 902H1613" stroke="#ffd152" stroke-width="2" fill="none" /><path d="M1761 879H1783L1775 890V900L1771 898V890Z" stroke="#ced0d6" stroke-width="2" fill="none" /><path d="M1853 882.5L1858 888H1848Z M1853 897.5L1848 892H1858Z" fill="#b4b6bc"/><rect x="1899" y="879" width="6" height="20" fill="#43454a"/><path d="M1924 885.5V881.5a3.5 3.5 0 0 0-3.5-3.5H1901.5a3.5 3.5 0 0 0-3.5 3.5v15a3.5 3.5 0 0 0 3.5 3.5H1919" stroke="#ced0d6" stroke-width="2" fill="none" /><path d="M1906 878L1906 900" stroke="#ced0d6" stroke-width="2" fill="none" /><circle cx="1922" cy="891.3" r="4" stroke="#ffd152" stroke-width="2" fill="none"/><path d="M1922 895.3V905M1922 902H1927" stroke="#ffd152" stroke-width="2" fill="none" /><path d="M2077 879H2099L2091 890V900L2087 898V890Z" stroke="#ced0d6" stroke-width="2" fill="none" /><path d="M2168 882.5L2173 888H2163Z M2168 897.5L2163 892H2173Z" fill="#b4b6bc"/><rect x="2215" y="879" width="6" height="20" fill="#43454a"/><rect x="2214" y="878" width="26" height="22" rx="3.5" stroke="#ced0d6" stroke-width="2" fill="none"/><path d="M2222 878L2222 900" stroke="#ced0d6" stroke-width="2" fill="none" /><path d="M2335 879H2357L2349 890V900L2345 898V890Z" stroke="#ced0d6" stroke-width="2" fill="none" /><path d="M2693 882.5L2698 888H2688Z M2693 897.5L2688 892H2698Z" fill="#b4b6bc"/><path d="M242 1905.5L250 1913L242 1920.5" stroke="#a8abb0" stroke-width="2" fill="none" /><path d="M333 1905.5L341 1913L333 1920.5" stroke="#a8abb0" stroke-width="2" fill="none" /><path d="M370.2 1902H385.8M374.5 1902V1906M380.6 1902V1906" stroke="#dfe1e5" stroke-width="2" fill="none" stroke-linecap="butt"/><path d="M367 1905V1921M367 1910.1H371M367 1915.8H371" stroke="#dfe1e5" stroke-width="2" fill="none" stroke-linecap="butt"/><path d="M389 1905V1921M385 1910.1H389M385 1915.8H389" stroke="#548af7" stroke-width="2" fill="none" stroke-linecap="butt"/><path d="M370.2 1924H385.8M374.5 1920V1924M380.6 1920V1924" stroke="#548af7" stroke-width="2" fill="none" stroke-linecap="butt"/><rect x="2625.1" y="1910.9" width="17.8" height="13.9" rx="3.5" stroke="#ced0d6" stroke-width="2" fill="none"/><path d="M2634 1915V1920.5M2640 1910.9V1907.5a4.5 4.5 0 0 1 9 0V1910.5" stroke="#ced0d6" stroke-width="2" fill="none" /><path d="M2690 1914.4V1908a7.8 7.8 0 0 1 15.6 0V1914.4L2709.5 1922.2H2686.3Z" stroke="#ced0d6" stroke-width="2" fill="none" /><path d="M2694.6 1925.5H2701a3.2 3.2 0 0 1-6.4 0Z" fill="#ced0d6"/></svg>
<div style="position:absolute;left:0;top:0;width:2752px;height:1944px;border:2px solid #5d6067;pointer-events:none"></div>
</body></html>
